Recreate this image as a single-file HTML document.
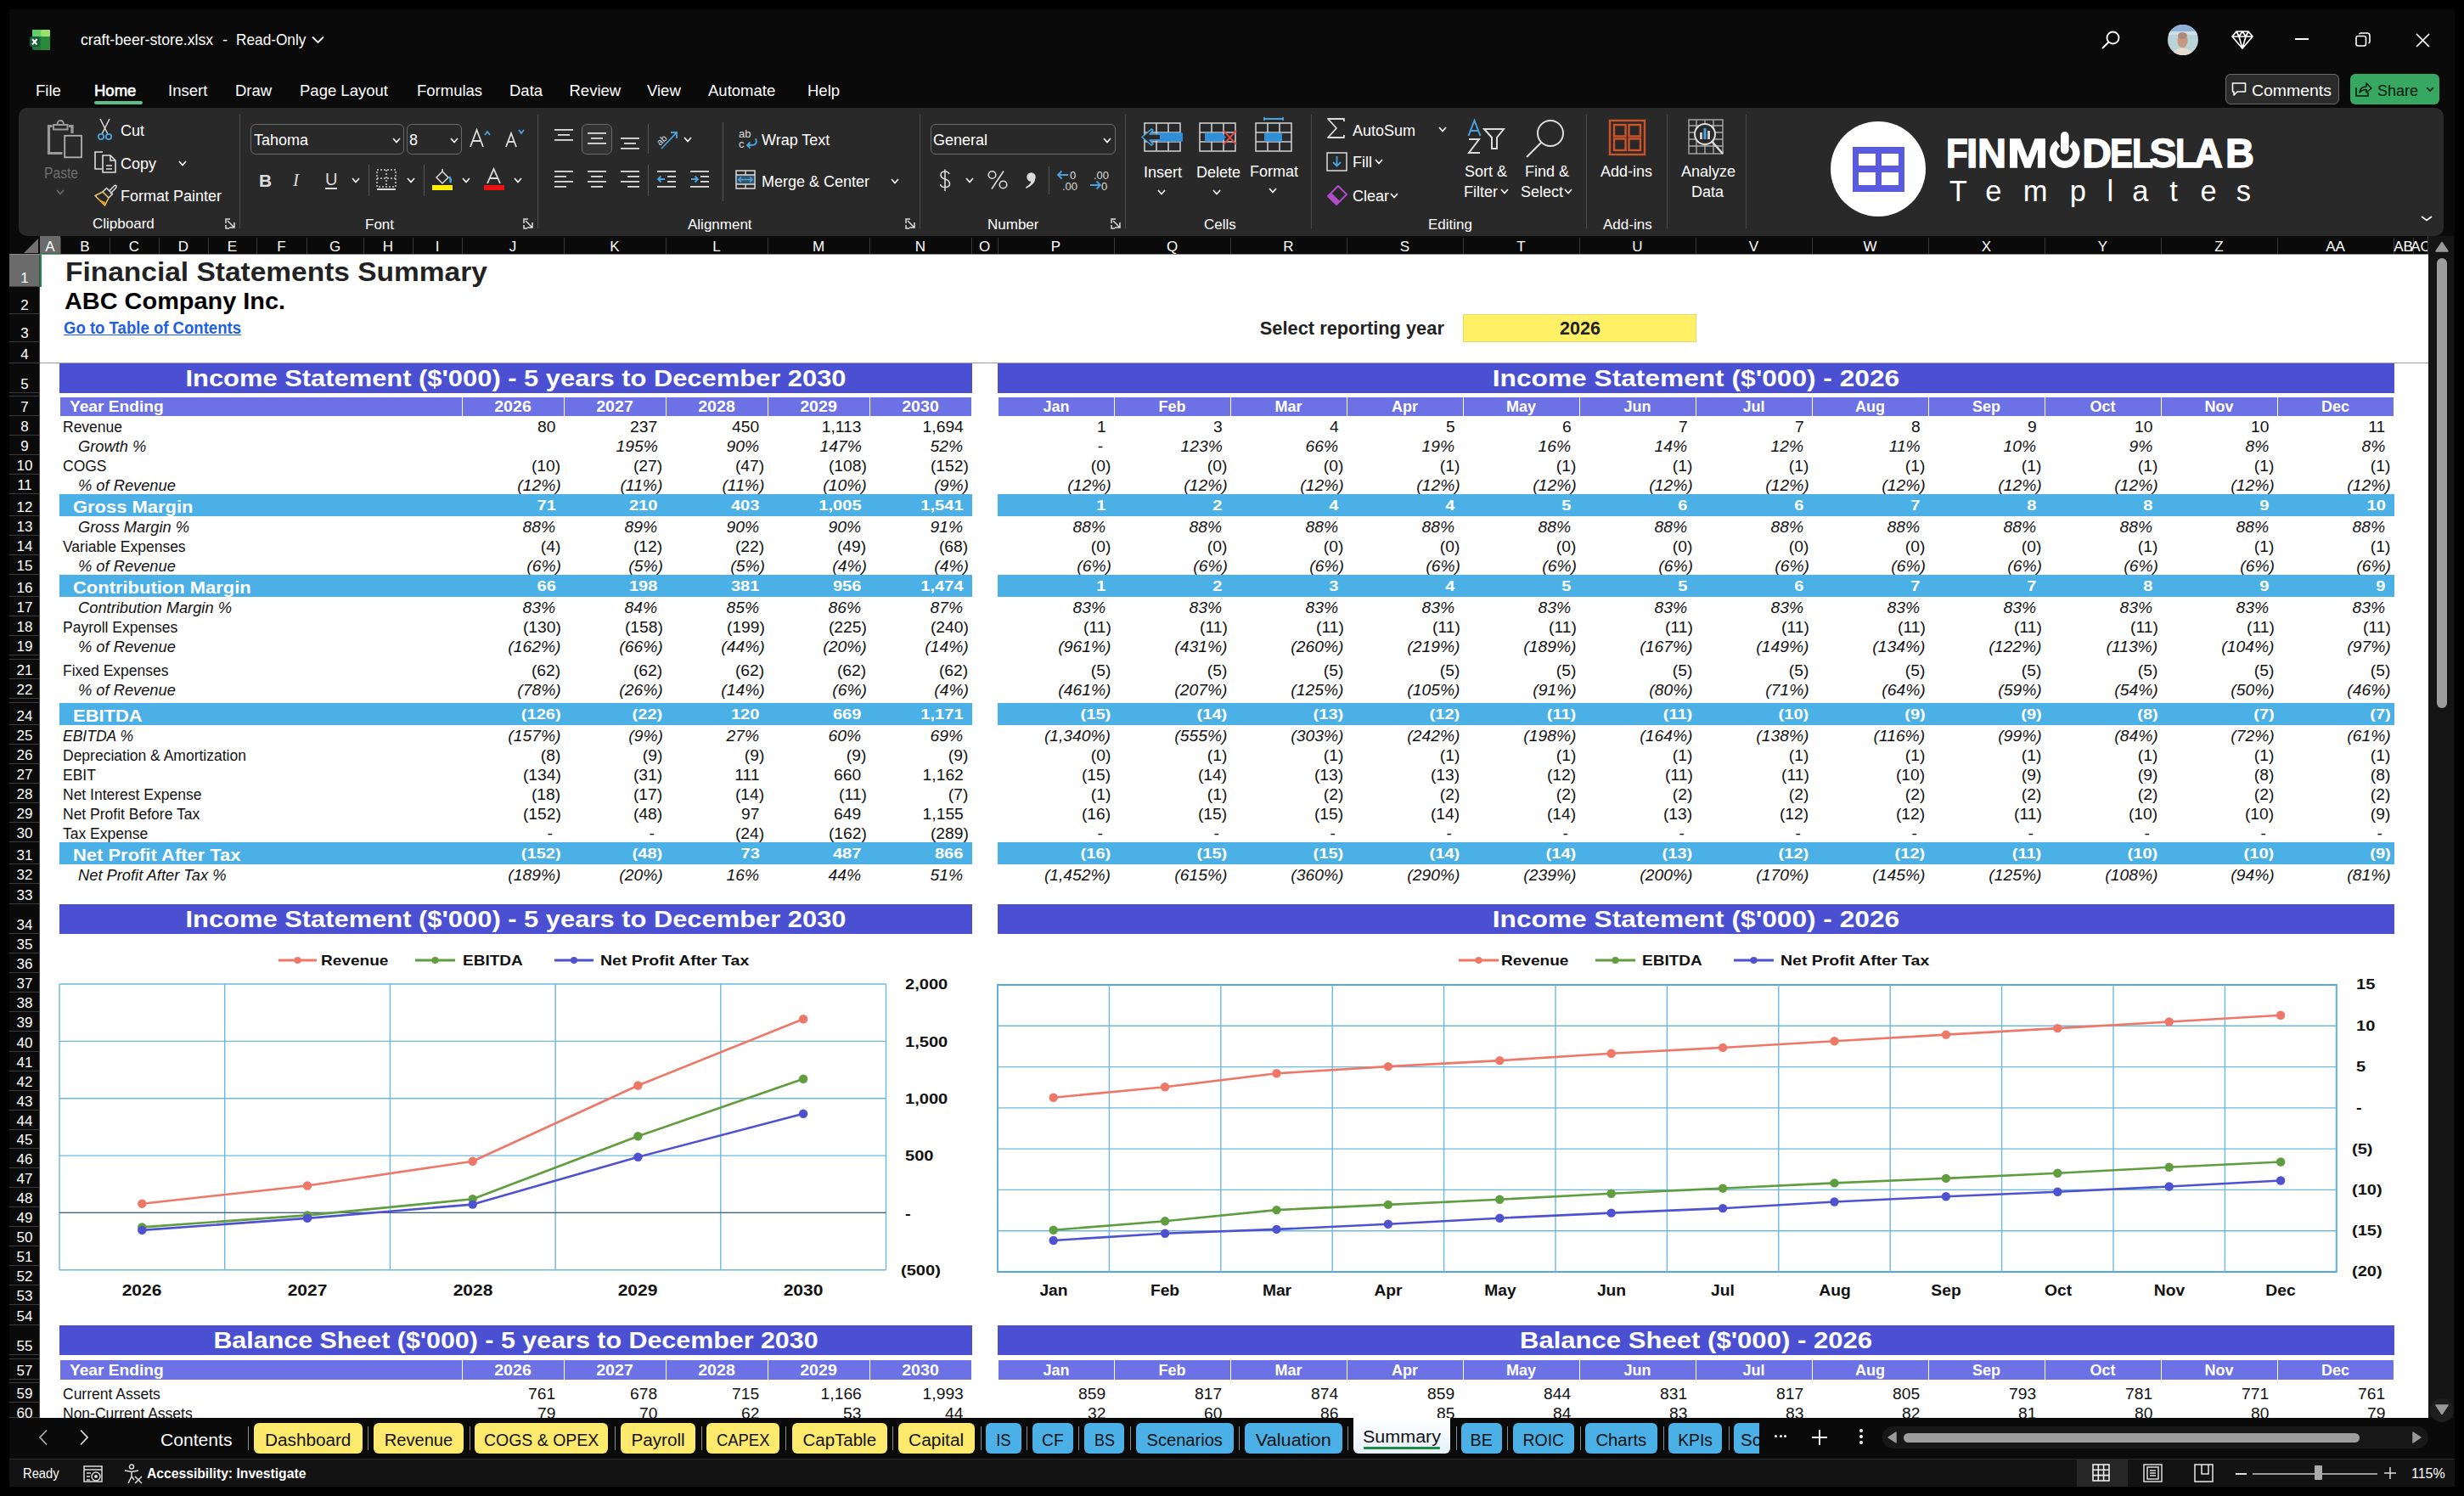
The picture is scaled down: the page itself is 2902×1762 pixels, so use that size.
<!DOCTYPE html><html><head><meta charset="utf-8"><style>
*{margin:0;padding:0;box-sizing:border-box}
html,body{width:2902px;height:1762px;overflow:hidden;background:#000;font-family:"Liberation Sans",sans-serif}
.a{position:absolute}
.t{position:absolute;white-space:nowrap;line-height:1}
.ui{color:#fff;font-size:18px}
svg{position:absolute;overflow:visible}
</style></head><body><div class="a" style="left:11px;top:11px;width:2880px;height:1740px;background:#0a0a0a"></div>
<svg style="left:35px;top:35px" width="24" height="24" viewBox="0 0 24 24">
<rect x="3" y="0" width="21" height="24" rx="2.5" fill="#1f7a3a"/>
<rect x="3" y="0" width="10" height="8" fill="#5fcf6a"/><rect x="13" y="0" width="11" height="8" rx="1" fill="#9be06a"/>
<rect x="13" y="8" width="11" height="16" fill="#2a8a3c"/>
<rect x="0" y="8" width="12" height="12" rx="2" fill="#185c37"/>
<path d="M3 11 L8.5 17.5 M8.5 11 L3 17.5" stroke="#fff" stroke-width="2"/>
</svg>
<div class="t" style="left:95.4px;top:38.0px;font-size:18.5px;color:#fff;transform:scaleX(0.955);transform-origin:0 0">craft-beer-store.xlsx</div>
<div class="t" style="left:262.0px;top:38.0px;font-size:18.5px;color:#fff">-</div>
<div class="t" style="left:278.0px;top:38.0px;font-size:18.5px;color:#fff;transform:scaleX(0.932);transform-origin:0 0">Read-Only</div>
<svg style="left:367px;top:42px" width="15" height="10"><path d="M1 1.5 L7.5 8 L14 1.5" stroke="#fff" stroke-width="1.8" fill="none"/></svg>
<svg style="left:2474px;top:36px" width="24" height="22"><circle cx="14.5" cy="8.5" r="7" stroke="#fff" stroke-width="1.8" fill="none"/><path d="M9.5 13.5 L2 21" stroke="#fff" stroke-width="2"/></svg>
<svg style="left:2552px;top:28px" width="38" height="38"><defs><clipPath id="av"><circle cx="19" cy="19" r="18"/></clipPath></defs>
<g clip-path="url(#av)"><rect width="38" height="38" fill="#b9d3d6"/><rect y="0" width="38" height="9" fill="#8fb0d8"/><rect y="9" width="38" height="4" fill="#cfe0e8"/>
<ellipse cx="18.5" cy="20" rx="6" ry="8.5" fill="#c49a84"/><ellipse cx="18.5" cy="14" rx="5.5" ry="4" fill="#b08878"/><path d="M5 38 Q8 29 18.5 28.5 Q29 29 32 38 Z" fill="#e6ddd0"/></g></svg>
<svg style="left:2628px;top:35px" width="26" height="24"><path d="M6 2 H20 L25 8 L13 22 L1 8 Z M1 8 H25 M9 8 L13 22 L17 8 M6 2 L9 8 L13 2 L17 8 L20 2" stroke="#fff" stroke-width="1.7" fill="none" stroke-linejoin="round"/></svg>
<div class="a" style="left:2703px;top:45px;width:16px;height:2px;background:#fff"></div>
<svg style="left:2774px;top:38px" width="18" height="17"><rect x="1" y="4.5" width="11.5" height="11.5" rx="2.2" stroke="#fff" stroke-width="1.6" fill="none"/><path d="M4.5 2.2 Q5 1 6.5 1 H14 Q17 1 17 4 V11 Q17 12.5 15.5 13" stroke="#fff" stroke-width="1.6" fill="none"/></svg>
<svg style="left:2845px;top:39px" width="17" height="17"><path d="M1 1 L16 16 M16 1 L1 16" stroke="#fff" stroke-width="1.7"/></svg>
<div class="a" style="left:2621px;top:87px;width:134px;height:36px;border:1.5px solid #6a6a6a;border-radius:6px;background:#2b2b2b"></div>
<svg style="left:2628px;top:96px" width="18" height="18"><path d="M1.5 2 H16.5 V12 H7 L3 16 V12 H1.5 Z" stroke="#fff" stroke-width="1.6" fill="none" stroke-linejoin="round"/></svg>
<div class="t" style="left:2652.0px;top:97.8px;font-size:18px;color:#fff;transform:scaleX(1.08);transform-origin:0 0">Comments</div>
<div class="a" style="left:2768px;top:87px;width:105px;height:36px;background:#37a862;border-radius:6px"></div>
<svg style="left:2773px;top:96px" width="21" height="19"><path d="M2 7 V17 H16 V13" stroke="#0a1a10" stroke-width="1.6" fill="none"/><path d="M6 13 Q7 6 14 6 V2 L20 8 L14 13 V9.5 Q9 9.5 6 13 Z" stroke="#0a1a10" stroke-width="1.5" fill="none" stroke-linejoin="round"/></svg>
<div class="t" style="left:2800.0px;top:97.8px;font-size:18px;color:#0a1a10">Share</div>
<svg style="left:2857px;top:102px" width="10" height="7"><path d="M1 1 L5 5 L9 1" stroke="#0a1a10" stroke-width="1.6" fill="none"/></svg>
<div class="t" style="left:42.0px;top:98.3px;font-size:18.5px;color:#fff">File</div>
<div class="t" style="left:111.0px;top:98.3px;font-size:18.5px;color:#fff;-webkit-text-stroke:0.6px #fff">Home</div>
<div class="t" style="left:198.0px;top:98.3px;font-size:18.5px;color:#fff">Insert</div>
<div class="t" style="left:277.0px;top:98.3px;font-size:18.5px;color:#fff">Draw</div>
<div class="t" style="left:353.0px;top:98.3px;font-size:18.5px;color:#fff">Page Layout</div>
<div class="t" style="left:491.0px;top:98.3px;font-size:18.5px;color:#fff">Formulas</div>
<div class="t" style="left:600.0px;top:98.3px;font-size:18.5px;color:#fff">Data</div>
<div class="t" style="left:670.5px;top:98.3px;font-size:18.5px;color:#fff">Review</div>
<div class="t" style="left:762.0px;top:98.3px;font-size:18.5px;color:#fff">View</div>
<div class="t" style="left:834.0px;top:98.3px;font-size:18.5px;color:#fff">Automate</div>
<div class="t" style="left:951.0px;top:98.3px;font-size:18.5px;color:#fff">Help</div>
<div class="a" style="left:111px;top:119px;width:57px;height:4px;background:#5dbe8a;border-radius:2px"></div>
<div class="a" style="left:22px;top:127px;width:2856px;height:151px;background:#292929;border-radius:10px"></div>
<svg style="left:54px;top:140px" width="44" height="48"><g fill="none" stroke-linejoin="miter">
<path d="M7.5 8.5 H3.5 V40.5 H19.5" stroke="#9a9a9a" stroke-width="3.2"/><path d="M27 8.5 H31 V17" stroke="#9a9a9a" stroke-width="3.2"/>
<rect x="9" y="7" width="16.5" height="5.5" stroke="#9a9a9a" stroke-width="2"/><path d="M13.5 7 Q13.5 2 17.2 2 Q21 2 21 7" stroke="#9a9a9a" stroke-width="1.8"/>
<rect x="22.2" y="19.8" width="19.8" height="25.5" stroke="#b0b0b0" stroke-width="1.8"/></g></svg>
<div class="t" style="left:52.0px;top:194.8px;font-size:18px;color:#6e6e6e;transform:scaleX(0.87);transform-origin:0 0">Paste</div>
<svg style="left:66.0px;top:223px" width="10" height="7"><path d="M1 1 L5.0 5.5 L9 1" stroke="#6e6e6e" stroke-width="1.6" fill="none"/></svg>
<svg style="left:114px;top:139px" width="20" height="27"><path d="M4 1 L13 19 M15 1 L6 19" stroke="#ddd" stroke-width="1.5"/><circle cx="5" cy="22" r="3.2" stroke="#4aa3df" stroke-width="1.8" fill="none"/><circle cx="14" cy="22" r="3.2" stroke="#4aa3df" stroke-width="1.8" fill="none"/></svg>
<div class="t" style="left:142.0px;top:144.8px;font-size:18px;color:#fff">Cut</div>
<svg style="left:111px;top:178px" width="27" height="27"><g stroke="#ddd" stroke-width="1.6" fill="none"><path d="M10 1 H1 V21 H9"/><path d="M10 5 H19 L25 11 V25 H10 Z"/><path d="M19 5 V11 H25 M14 17 H21 M14 21 H21"/></g></svg>
<div class="t" style="left:142.0px;top:183.8px;font-size:18px;color:#fff">Copy</div>
<svg style="left:210.0px;top:189px" width="10" height="7"><path d="M1 1 L5.0 5.5 L9 1" stroke="#fff" stroke-width="1.6" fill="none"/></svg>
<svg style="left:110px;top:216px" width="28" height="27"><path d="M2 14.5 L11 10 L18 17 L13.5 26 Z" fill="none" stroke="#f0c860" stroke-width="1.5" stroke-linejoin="round"/><path d="M4.5 18 L14 22 L13.5 26 Z" fill="#e8a020"/><path d="M11 10 L15.5 5.5 L22.5 12.5 L18 17" fill="none" stroke="#ddd" stroke-width="1.5" stroke-linejoin="round"/><path d="M18.5 9 L24.5 3 Q26 1.5 27 3 Q27.5 4.5 26 6 L20 12" fill="none" stroke="#ddd" stroke-width="1.5" stroke-linejoin="round"/></svg>
<div class="t" style="left:142.0px;top:221.8px;font-size:18px;color:#fff">Format Painter</div>
<div class="t" style="left:109.0px;top:254.6px;font-size:17px;color:#fff">Clipboard</div>
<svg style="left:265px;top:257px" width="13" height="13"><path d="M1 6 V1 H6 M3 3 L11 11 M11 5 V11 H5 M1 8 V12 H5" stroke="#ddd" stroke-width="1.5" fill="none"/></svg>
<div class="a" style="left:282px;top:135px;width:1px;height:134px;background:#4a4a4a"></div>
<div class="a" style="left:295px;top:146px;width:181px;height:36px;border:1.5px solid #6a6a6a;border-radius:6px"></div>
<div class="t" style="left:299.0px;top:155.8px;font-size:18px;color:#fff">Tahoma</div>
<svg style="left:462.0px;top:162px" width="10" height="7"><path d="M1 1 L5.0 5.5 L9 1" stroke="#fff" stroke-width="1.6" fill="none"/></svg>
<div class="a" style="left:479px;top:146px;width:65px;height:36px;border:1.5px solid #6a6a6a;border-radius:6px"></div>
<div class="t" style="left:482.0px;top:155.8px;font-size:18px;color:#fff">8</div>
<svg style="left:530.0px;top:162px" width="10" height="7"><path d="M1 1 L5.0 5.5 L9 1" stroke="#fff" stroke-width="1.6" fill="none"/></svg>
<svg style="left:553px;top:151px" width="26" height="24"><path d="M1 22 L8.5 2 L16 22 M4 15 H13" stroke="#ddd" stroke-width="1.8" fill="none"/><path d="M18 8 L21 4 L24 8" stroke="#4aa3df" stroke-width="1.8" fill="none"/></svg>
<svg style="left:595px;top:151px" width="24" height="24"><path d="M1 22 L7 6 L13 22 M3.5 16 H10.5" stroke="#ddd" stroke-width="1.8" fill="none"/><path d="M16 2 L19 6 L22 2" stroke="#4aa3df" stroke-width="1.8" fill="none"/></svg>
<div class="t" style="left:305.0px;top:202.2px;font-size:21px;color:#ddd;font-weight:bold">B</div>
<div class="t" style="left:345.0px;top:202.2px;font-size:21px;color:#ddd;font-family:Liberation Serif;font-style:italic">I</div>
<div class="t" style="left:383.0px;top:201.1px;font-size:20px;color:#ddd">U</div>
<div class="a" style="left:383px;top:221px;width:14px;height:2px;background:#ddd"></div>
<svg style="left:414.0px;top:209px" width="10" height="7"><path d="M1 1 L5.0 5.5 L9 1" stroke="#fff" stroke-width="1.6" fill="none"/></svg>
<div class="a" style="left:434px;top:194px;width:1px;height:37px;background:#555"></div>
<svg style="left:443px;top:199px" width="25" height="26"><g stroke="#ccc" stroke-width="1.5" fill="none" stroke-dasharray="2 2"><rect x="1" y="1" width="22" height="20"/><path d="M12 1 V21 M1 11 H23"/></g><path d="M1 24 H23" stroke="#ddd" stroke-width="2"/></svg>
<svg style="left:479.0px;top:209px" width="10" height="7"><path d="M1 1 L5.0 5.5 L9 1" stroke="#fff" stroke-width="1.6" fill="none"/></svg>
<div class="a" style="left:499px;top:194px;width:1px;height:37px;background:#555"></div>
<svg style="left:508px;top:198px" width="26" height="27"><path d="M6 11 L13 4 L20 11 L13 18 Z" stroke="#ddd" stroke-width="1.5" fill="none"/><path d="M13 4 V1" stroke="#ddd" stroke-width="1.5"/><path d="M21 10 Q24 14 22 17" stroke="#4aa3df" stroke-width="2.5" fill="none"/><rect x="1" y="20" width="24" height="6" fill="#ffee00"/></svg>
<svg style="left:544.0px;top:209px" width="10" height="7"><path d="M1 1 L5.0 5.5 L9 1" stroke="#fff" stroke-width="1.6" fill="none"/></svg>
<svg style="left:569px;top:198px" width="26" height="27"><path d="M5 18 L12.5 1 L20 18 M8 12 H17" stroke="#ddd" stroke-width="1.8" fill="none"/><rect x="1" y="20" width="24" height="6" fill="#ee1111"/></svg>
<svg style="left:605.0px;top:209px" width="10" height="7"><path d="M1 1 L5.0 5.5 L9 1" stroke="#fff" stroke-width="1.6" fill="none"/></svg>
<div class="t" style="left:430.0px;top:255.6px;font-size:17px;color:#fff">Font</div>
<svg style="left:616px;top:257px" width="13" height="13"><path d="M1 6 V1 H6 M3 3 L11 11 M11 5 V11 H5 M1 8 V12 H5" stroke="#ddd" stroke-width="1.5" fill="none"/></svg>
<div class="a" style="left:633px;top:135px;width:1px;height:134px;background:#4a4a4a"></div>
<svg style="left:653px;top:152px" width="22" height="20"><rect x="0.0" y="0" width="22" height="1.8" fill="#ddd"/><rect x="4.0" y="6" width="14" height="1.8" fill="#ddd"/><rect x="0.0" y="12" width="22" height="1.8" fill="#ddd"/></svg>
<div class="a" style="left:685px;top:146px;width:36px;height:36px;border:1.5px solid #6a6a6a;border-radius:6px;background:#333"></div>
<svg style="left:692px;top:156px" width="22" height="20"><rect x="0.0" y="0" width="22" height="1.8" fill="#ddd"/><rect x="4.0" y="6" width="14" height="1.8" fill="#ddd"/><rect x="0.0" y="12" width="22" height="1.8" fill="#ddd"/></svg>
<svg style="left:731px;top:162px" width="22" height="20"><rect x="0.0" y="0" width="22" height="1.8" fill="#ddd"/><rect x="4.0" y="6" width="14" height="1.8" fill="#ddd"/><rect x="0.0" y="12" width="22" height="1.8" fill="#ddd"/></svg>
<div class="a" style="left:763px;top:146px;width:1px;height:35px;background:#555"></div>
<svg style="left:771px;top:151px" width="30" height="26"><text x="2" y="18" transform="rotate(-45 8 14)" font-size="11" fill="#ddd" font-family="Liberation Sans">ab</text><path d="M8 24 L26 5 M19 5 H26 V12" stroke="#4aa3df" stroke-width="1.8" fill="none"/></svg>
<svg style="left:805.0px;top:161px" width="10" height="7"><path d="M1 1 L5.0 5.5 L9 1" stroke="#fff" stroke-width="1.6" fill="none"/></svg>
<svg style="left:653px;top:201px" width="22" height="26"><rect x="0" y="0" width="22" height="1.8" fill="#ddd"/><rect x="0" y="6" width="14" height="1.8" fill="#ddd"/><rect x="0" y="12" width="22" height="1.8" fill="#ddd"/><rect x="0" y="18" width="14" height="1.8" fill="#ddd"/></svg>
<svg style="left:692px;top:201px" width="22" height="26"><rect x="0.0" y="0" width="22" height="1.8" fill="#ddd"/><rect x="4.0" y="6" width="14" height="1.8" fill="#ddd"/><rect x="0.0" y="12" width="22" height="1.8" fill="#ddd"/><rect x="4.0" y="18" width="14" height="1.8" fill="#ddd"/></svg>
<svg style="left:731px;top:201px" width="22" height="26"><rect x="0" y="0" width="22" height="1.8" fill="#ddd"/><rect x="8" y="6" width="14" height="1.8" fill="#ddd"/><rect x="0" y="12" width="22" height="1.8" fill="#ddd"/><rect x="8" y="18" width="14" height="1.8" fill="#ddd"/></svg>
<div class="a" style="left:763px;top:194px;width:1px;height:37px;background:#555"></div>
<svg style="left:774px;top:201px" width="23" height="21"><g fill="#ddd"><rect x="0" y="0" width="22" height="1.8"/><rect x="12" y="6" width="10" height="1.8"/><rect x="12" y="12" width="10" height="1.8"/><rect x="0" y="18" width="22" height="1.8"/></g><path d="M9 10 H1 M4.5 6.5 L1 10 L4.5 13.5" stroke="#4aa3df" stroke-width="1.8" fill="none"/></svg>
<svg style="left:813px;top:201px" width="23" height="21"><g fill="#ddd"><rect x="0" y="0" width="22" height="1.8"/><rect x="12" y="6" width="10" height="1.8"/><rect x="12" y="12" width="10" height="1.8"/><rect x="0" y="18" width="22" height="1.8"/></g><path d="M1 10 H9 M5.5 6.5 L9 10 L5.5 13.5" stroke="#4aa3df" stroke-width="1.8" fill="none"/></svg>
<div class="a" style="left:851px;top:144px;width:1px;height:93px;background:#555"></div>
<svg style="left:870px;top:151px" width="24" height="26"><text x="0" y="11" font-size="13" fill="#ddd" font-family="Liberation Sans">ab</text><text x="0" y="23" font-size="13" fill="#ddd" font-family="Liberation Sans">c</text><path d="M20 12 Q23 20 15 20 H10 M13.5 16.5 L10 20 L13.5 23.5" stroke="#4aa3df" stroke-width="1.8" fill="none"/></svg>
<div class="t" style="left:897.0px;top:155.8px;font-size:18px;color:#fff">Wrap Text</div>
<svg style="left:866px;top:200px" width="25" height="24"><rect x="1" y="1" width="22" height="21" stroke="#ddd" stroke-width="1.5" fill="none"/><rect x="1" y="6" width="22" height="11" fill="#4aa3df" opacity="0.35"/><path d="M1 6 H23 M1 17 H23 M12 1 V6 M12 17 V22" stroke="#ddd" stroke-width="1.4"/><path d="M4 11.5 H20 M7 8.5 L4 11.5 L7 14.5 M17 8.5 L20 11.5 L17 14.5" stroke="#4aa3df" stroke-width="1.6" fill="none"/></svg>
<div class="t" style="left:897.0px;top:204.8px;font-size:18px;color:#fff">Merge &amp; Center</div>
<svg style="left:1049.0px;top:210px" width="10" height="7"><path d="M1 1 L5.0 5.5 L9 1" stroke="#fff" stroke-width="1.6" fill="none"/></svg>
<div class="t" style="left:810.0px;top:255.6px;font-size:17px;color:#fff">Alignment</div>
<svg style="left:1066px;top:257px" width="13" height="13"><path d="M1 6 V1 H6 M3 3 L11 11 M11 5 V11 H5 M1 8 V12 H5" stroke="#ddd" stroke-width="1.5" fill="none"/></svg>
<div class="a" style="left:1083px;top:135px;width:1px;height:134px;background:#4a4a4a"></div>
<div class="a" style="left:1096px;top:146px;width:218px;height:36px;border:1.5px solid #6a6a6a;border-radius:6px"></div>
<div class="t" style="left:1099.0px;top:155.8px;font-size:18px;color:#fff">General</div>
<svg style="left:1299.0px;top:162px" width="10" height="7"><path d="M1 1 L5.0 5.5 L9 1" stroke="#fff" stroke-width="1.6" fill="none"/></svg>
<svg style="left:1105px;top:199px" width="16" height="27"><path d="M13 6 Q12 3 8 3 Q3 3 3 7 Q3 10.5 8 12 Q13.5 13.5 13.5 17.5 Q13.5 21.5 8 21.5 Q3 21.5 2.5 18 M8 0.5 V26" stroke="#ddd" stroke-width="1.6" fill="none"/></svg>
<svg style="left:1137.0px;top:209px" width="10" height="7"><path d="M1 1 L5.0 5.5 L9 1" stroke="#fff" stroke-width="1.6" fill="none"/></svg>
<svg style="left:1163px;top:200px" width="25" height="24"><circle cx="5.5" cy="6" r="4.3" stroke="#ddd" stroke-width="1.6" fill="none"/><circle cx="18.5" cy="17.5" r="4.3" stroke="#ddd" stroke-width="1.6" fill="none"/><path d="M19 1.5 L5 22.5" stroke="#ddd" stroke-width="1.6"/></svg>
<svg style="left:1207px;top:202px" width="14" height="21"><circle cx="7.5" cy="6.5" r="5.2" fill="#ddd"/><path d="M12.2 7 Q13 15 1.5 20 L1 18.5 Q8 14.5 7.5 10 Z" fill="#ddd"/></svg>
<div class="a" style="left:1235px;top:196px;width:1px;height:33px;background:#555"></div>
<svg style="left:1244px;top:199px" width="26" height="26"><path d="M14 7 H2 M6.5 2.5 L2 7 L6.5 11.5" stroke="#4aa3df" stroke-width="1.8" fill="none"/><text x="16" y="12" font-size="13" fill="#ddd" font-family="Liberation Sans">0</text><text x="7" y="24.5" font-size="13" fill="#ddd" font-family="Liberation Sans">.00</text></svg>
<svg style="left:1282px;top:199px" width="28" height="26"><text x="6" y="12" font-size="13" fill="#ddd" font-family="Liberation Sans">.00</text><path d="M2 19 H14 M9.5 14.5 L14 19 L9.5 23.5" stroke="#4aa3df" stroke-width="1.8" fill="none"/><text x="15" y="24.5" font-size="13" fill="#ddd" font-family="Liberation Sans">0</text></svg>
<div class="t" style="left:1163.0px;top:255.6px;font-size:17px;color:#fff">Number</div>
<svg style="left:1308px;top:257px" width="13" height="13"><path d="M1 6 V1 H6 M3 3 L11 11 M11 5 V11 H5 M1 8 V12 H5" stroke="#ddd" stroke-width="1.5" fill="none"/></svg>
<div class="a" style="left:1325px;top:135px;width:1px;height:134px;background:#4a4a4a"></div>
<svg style="left:1340px;top:139px" width="62" height="45" viewBox="-8 -6 62 45"><g stroke="#ccc" stroke-width="1.6" fill="none">
<rect x="0" y="0" width="42" height="33"/><path d="M0 11 H42 M0 22 H42 M14 0 V33 M28 0 V33"/></g><rect x="16" y="11.5" width="29" height="10" fill="#2f8fd8"/><path d="M15 16.5 H44" stroke="#2f8fd8" stroke-width="10"/><path d="M18 13 H6 L10 8.5 L8 7 L-3 16.5 L8 26 L10 24.5 L6 20 H18" stroke="#4aa3df" stroke-width="1.6" fill="#2a2a2a" stroke-linejoin="round"/></svg>
<div class="t" style="left:1347.0px;top:193.8px;font-size:18px;color:#fff">Insert</div>
<svg style="left:1363.0px;top:223px" width="10" height="7"><path d="M1 1 L5.0 5.5 L9 1" stroke="#fff" stroke-width="1.6" fill="none"/></svg>
<svg style="left:1405px;top:139px" width="62" height="45" viewBox="-8 -6 62 45"><g stroke="#ccc" stroke-width="1.6" fill="none">
<rect x="0" y="0" width="42" height="33"/><path d="M0 11 H42 M0 22 H42 M14 0 V33 M28 0 V33"/></g><path d="M6 11.5 H26 L31 16.5 L26 21.5 H6 Z" fill="#2f8fd8"/><path d="M28 9 L43 25 M43 9 L28 25" stroke="#e04848" stroke-width="2"/></svg>
<div class="t" style="left:1409.0px;top:193.8px;font-size:18px;color:#fff">Delete</div>
<svg style="left:1428.0px;top:223px" width="10" height="7"><path d="M1 1 L5.0 5.5 L9 1" stroke="#fff" stroke-width="1.6" fill="none"/></svg>
<svg style="left:1471px;top:139px" width="62" height="45" viewBox="-8 -6 62 45"><g stroke="#ccc" stroke-width="1.6" fill="none">
<rect x="0" y="0" width="42" height="33"/><path d="M0 11 H42 M0 22 H42 M14 0 V33 M28 0 V33"/></g><rect x="10" y="11.5" width="21" height="10" fill="#2f8fd8"/><path d="M10 -5 H32 M10 -7 V-3 M32 -7 V-3" stroke="#4aa3df" stroke-width="1.8"/></svg>
<div class="t" style="left:1472.0px;top:192.8px;font-size:18px;color:#fff">Format</div>
<svg style="left:1494.0px;top:221px" width="10" height="7"><path d="M1 1 L5.0 5.5 L9 1" stroke="#fff" stroke-width="1.6" fill="none"/></svg>
<div class="t" style="left:1418.0px;top:255.6px;font-size:17px;color:#fff">Cells</div>
<div class="a" style="left:1544px;top:135px;width:1px;height:134px;background:#4a4a4a"></div>
<svg style="left:1563px;top:139px" width="22" height="24"><path d="M20 4 V1 H1 L11 12 L1 23 H20 V20" stroke="#ddd" stroke-width="1.8" fill="none" stroke-linejoin="round"/></svg>
<div class="t" style="left:1593.0px;top:144.8px;font-size:18px;color:#fff">AutoSum</div>
<svg style="left:1694.0px;top:149px" width="10" height="7"><path d="M1 1 L5.0 5.5 L9 1" stroke="#fff" stroke-width="1.6" fill="none"/></svg>
<svg style="left:1562px;top:179px" width="25" height="24"><rect x="1" y="1" width="23" height="21" stroke="#ddd" stroke-width="1.5" fill="none"/><path d="M12.5 5 V16 M8 12 L12.5 16.5 L17 12" stroke="#4aa3df" stroke-width="1.8" fill="none"/></svg>
<div class="t" style="left:1593.0px;top:181.8px;font-size:18px;color:#fff">Fill</div>
<svg style="left:1619.0px;top:187px" width="10" height="7"><path d="M1 1 L5.0 5.5 L9 1" stroke="#fff" stroke-width="1.6" fill="none"/></svg>
<svg style="left:1562px;top:217px" width="26" height="26"><path d="M14 2 L24 12 L12 24 L2 14 Z" fill="none" stroke="#b04cc8" stroke-width="2" stroke-linejoin="round"/><path d="M2 14 L6 10 L16 20 L12 24 Z" fill="#b04cc8"/></svg>
<div class="t" style="left:1593.0px;top:221.8px;font-size:18px;color:#fff">Clear</div>
<svg style="left:1637.0px;top:227px" width="10" height="7"><path d="M1 1 L5.0 5.5 L9 1" stroke="#fff" stroke-width="1.6" fill="none"/></svg>
<svg style="left:1727px;top:140px" width="48" height="44"><path d="M2.5 20 L9.5 2 L16.5 20 M5 14 H14" stroke="#4aa3df" stroke-width="2" fill="none"/><path d="M3 24 H15 L3 40 H16" stroke="#ddd" stroke-width="2" fill="none" stroke-linejoin="miter"/><path d="M21 12 H44 L36 22 V35 H30 V22 Z" stroke="#ddd" stroke-width="2" fill="none" stroke-linejoin="miter"/></svg>
<div class="t" style="left:1725.0px;top:192.8px;font-size:18px;color:#fff">Sort &amp;</div>
<div class="t" style="left:1724.0px;top:216.8px;font-size:18px;color:#fff">Filter</div>
<svg style="left:1767.0px;top:222px" width="10" height="7"><path d="M1 1 L5.0 5.5 L9 1" stroke="#fff" stroke-width="1.6" fill="none"/></svg>
<svg style="left:1796px;top:139px" width="48" height="48"><circle cx="30" cy="18" r="15" stroke="#ddd" stroke-width="2" fill="none"/><path d="M19.5 28.5 L2 46" stroke="#ddd" stroke-width="2.2"/></svg>
<div class="t" style="left:1796.0px;top:192.8px;font-size:18px;color:#fff">Find &amp;</div>
<div class="t" style="left:1791.0px;top:216.8px;font-size:18px;color:#fff">Select</div>
<svg style="left:1842.0px;top:222px" width="10" height="7"><path d="M1 1 L5.0 5.5 L9 1" stroke="#fff" stroke-width="1.6" fill="none"/></svg>
<div class="t" style="left:1682.0px;top:255.6px;font-size:17px;color:#fff">Editing</div>
<div class="a" style="left:1868px;top:135px;width:1px;height:134px;background:#4a4a4a"></div>
<svg style="left:1894px;top:140px" width="45" height="44"><g stroke="#cc5428" stroke-width="2.4" fill="none"><rect x="2" y="2" width="41" height="40"/><rect x="7" y="7" width="13.5" height="13.5"/><rect x="24.5" y="7" width="13.5" height="13.5"/><rect x="7" y="23.5" width="13.5" height="13.5"/><rect x="24.5" y="23.5" width="13.5" height="13.5"/></g></svg>
<div class="t" style="left:1885.0px;top:192.8px;font-size:18px;color:#fff">Add-ins</div>
<div class="t" style="left:1888.0px;top:255.6px;font-size:17px;color:#fff">Add-ins</div>
<div class="a" style="left:1963px;top:135px;width:1px;height:134px;background:#4a4a4a"></div>
<svg style="left:1988px;top:140px" width="44" height="44"><g stroke="#aaa" stroke-width="1.4" fill="none"><rect x="1" y="1" width="40" height="40"/><path d="M1 8 H41 M1 16 H41 M1 24 H41 M1 32 H41 M10 1 V41 M20 1 V41 M30 1 V41"/></g><circle cx="20" cy="18" r="12" fill="#292929" stroke="#ddd" stroke-width="2"/><rect x="14" y="16" width="3" height="8" fill="#ccc"/><rect x="18.5" y="11" width="3" height="13" fill="#4aa3df"/><rect x="23" y="14" width="3" height="10" fill="#ccc"/><path d="M28.5 27 L41 41" stroke="#ddd" stroke-width="2.4"/></svg>
<div class="t" style="left:1980.0px;top:192.8px;font-size:18px;color:#fff">Analyze</div>
<div class="t" style="left:1992.0px;top:216.8px;font-size:18px;color:#fff">Data</div>
<div class="a" style="left:2056px;top:135px;width:1px;height:134px;background:#4a4a4a"></div>
<svg style="left:2155px;top:142px" width="114" height="114"><circle cx="57" cy="57" r="56" fill="#fff"/>
<rect x="27" y="31" width="61" height="53" fill="#5a5ae0"/>
<rect x="34" y="39" width="20" height="14" fill="#fff"/><rect x="61" y="39" width="20" height="14" fill="#fff"/>
<rect x="34" y="61" width="20" height="15" fill="#fff"/><rect x="61" y="61" width="20" height="15" fill="#fff"/></svg>
<div class="t" style="left:2292.3px;top:157.0px;font-size:48px;color:#fff;font-weight:bold;-webkit-text-stroke:1.4px #fff;transform:scaleX(0.88);transform-origin:0 0">F</div>
<div class="t" style="left:2292.6px;top:157.0px;width:60px;text-align:center;font-size:48px;color:#fff;font-weight:bold;-webkit-text-stroke:1.4px #fff;transform:scaleX(1.0)">I</div>
<div class="t" style="left:2315.8px;top:157.0px;width:60px;text-align:center;font-size:48px;color:#fff;font-weight:bold;-webkit-text-stroke:1.4px #fff;transform:scaleX(0.98)">N</div>
<div class="t" style="left:2357.9px;top:157.0px;width:60px;text-align:center;font-size:48px;color:#fff;font-weight:bold;-webkit-text-stroke:1.4px #fff;transform:scaleX(1.2)">M</div>
<div class="t" style="left:2439.5px;top:157.0px;width:60px;text-align:center;font-size:48px;color:#fff;font-weight:bold;-webkit-text-stroke:1.4px #fff;transform:scaleX(1.0)">D</div>
<div class="t" style="left:2484.8px;top:157.0px;font-size:48px;color:#fff;font-weight:bold;-webkit-text-stroke:1.4px #fff;transform:scaleX(0.85);transform-origin:0 0">E</div>
<div class="t" style="left:2510.8px;top:157.0px;font-size:48px;color:#fff;font-weight:bold;-webkit-text-stroke:1.4px #fff;transform:scaleX(0.85);transform-origin:0 0">L</div>
<div class="t" style="left:2517.4px;top:157.0px;width:60px;text-align:center;font-size:48px;color:#fff;font-weight:bold;-webkit-text-stroke:1.4px #fff;transform:scaleX(1.0)">S</div>
<div class="t" style="left:2561.9px;top:157.0px;font-size:48px;color:#fff;font-weight:bold;-webkit-text-stroke:1.4px #fff;transform:scaleX(0.85);transform-origin:0 0">L</div>
<div class="t" style="left:2571.4px;top:157.0px;width:60px;text-align:center;font-size:48px;color:#fff;font-weight:bold;-webkit-text-stroke:1.4px #fff;transform:scaleX(0.98)">A</div>
<div class="t" style="left:2608.4px;top:157.0px;width:60px;text-align:center;font-size:48px;color:#fff;font-weight:bold;-webkit-text-stroke:1.4px #fff;transform:scaleX(0.98)">B</div>
<svg style="left:2410px;top:152px" width="44" height="50"><path d="M13.9 17 A13.6 13.6 0 1 0 29.5 17" stroke="#fff" stroke-width="8.5" fill="none"/><rect x="17" y="3" width="9.6" height="26.4" rx="4.8" fill="#fff"/></svg>
<div class="t" style="left:2281.4px;top:208.2px;width:50px;text-align:center;font-size:34.5px;color:#fff">T</div>
<div class="t" style="left:2322.8px;top:208.2px;width:50px;text-align:center;font-size:34.5px;color:#fff">e</div>
<div class="t" style="left:2372.2px;top:208.2px;width:50px;text-align:center;font-size:34.5px;color:#fff">m</div>
<div class="t" style="left:2422.4px;top:208.2px;width:50px;text-align:center;font-size:34.5px;color:#fff">p</div>
<div class="t" style="left:2460.3px;top:208.2px;width:50px;text-align:center;font-size:34.5px;color:#fff">l</div>
<div class="t" style="left:2495.8px;top:208.2px;width:50px;text-align:center;font-size:34.5px;color:#fff">a</div>
<div class="t" style="left:2535.1px;top:208.2px;width:50px;text-align:center;font-size:34.5px;color:#fff">t</div>
<div class="t" style="left:2576.1px;top:208.2px;width:50px;text-align:center;font-size:34.5px;color:#fff">e</div>
<div class="t" style="left:2617.4px;top:208.2px;width:50px;text-align:center;font-size:34.5px;color:#fff">s</div>
<svg style="left:2851.0px;top:254px" width="14" height="7"><path d="M1 1 L7.0 5.5 L13 1" stroke="#fff" stroke-width="1.6" fill="none"/></svg>
<div class="a" style="left:11px;top:278px;width:2849px;height:22px;background:#0a0a0a"></div>
<svg style="left:11px;top:278px" width="36" height="22"><path d="M34 3 V20 H17 Z" fill="#707070"/></svg>
<div class="a" style="left:47px;top:278px;width:24px;height:22px;background:#6b6b6b"></div>
<div class="a" style="left:47px;top:297.5px;width:24px;height:3px;background:#217a46"></div>
<div class="t" style="left:-241.0px;top:0px;width:600px;text-align:center;"></div>
<div class="t" style="left:39.0px;top:281.6px;width:40px;text-align:center;font-size:17px;color:#fff">A</div>
<div class="a" style="left:71px;top:280px;width:1px;height:20px;background:#3a3a3a"></div>
<div class="t" style="left:-200.0px;top:0px;width:600px;text-align:center;"></div>
<div class="t" style="left:71.0px;top:281.6px;width:58px;text-align:center;font-size:17px;color:#fff">B</div>
<div class="a" style="left:129px;top:280px;width:1px;height:20px;background:#3a3a3a"></div>
<div class="t" style="left:-142.0px;top:0px;width:600px;text-align:center;"></div>
<div class="t" style="left:129.0px;top:281.6px;width:58px;text-align:center;font-size:17px;color:#fff">C</div>
<div class="a" style="left:187px;top:280px;width:1px;height:20px;background:#3a3a3a"></div>
<div class="t" style="left:-84.0px;top:0px;width:600px;text-align:center;"></div>
<div class="t" style="left:187.0px;top:281.6px;width:58px;text-align:center;font-size:17px;color:#fff">D</div>
<div class="a" style="left:245px;top:280px;width:1px;height:20px;background:#3a3a3a"></div>
<div class="t" style="left:-26.5px;top:0px;width:600px;text-align:center;"></div>
<div class="t" style="left:245.0px;top:281.6px;width:57px;text-align:center;font-size:17px;color:#fff">E</div>
<div class="a" style="left:302px;top:280px;width:1px;height:20px;background:#3a3a3a"></div>
<div class="t" style="left:31.5px;top:0px;width:600px;text-align:center;"></div>
<div class="t" style="left:302.0px;top:281.6px;width:59px;text-align:center;font-size:17px;color:#fff">F</div>
<div class="a" style="left:361px;top:280px;width:1px;height:20px;background:#3a3a3a"></div>
<div class="t" style="left:94.5px;top:0px;width:600px;text-align:center;"></div>
<div class="t" style="left:361.0px;top:281.6px;width:67px;text-align:center;font-size:17px;color:#fff">G</div>
<div class="a" style="left:428px;top:280px;width:1px;height:20px;background:#3a3a3a"></div>
<div class="t" style="left:157.0px;top:0px;width:600px;text-align:center;"></div>
<div class="t" style="left:428.0px;top:281.6px;width:58px;text-align:center;font-size:17px;color:#fff">H</div>
<div class="a" style="left:486px;top:280px;width:1px;height:20px;background:#3a3a3a"></div>
<div class="t" style="left:215.0px;top:0px;width:600px;text-align:center;"></div>
<div class="t" style="left:486.0px;top:281.6px;width:58px;text-align:center;font-size:17px;color:#fff">I</div>
<div class="a" style="left:544px;top:280px;width:1px;height:20px;background:#3a3a3a"></div>
<div class="t" style="left:304.0px;top:0px;width:600px;text-align:center;"></div>
<div class="t" style="left:544.0px;top:281.6px;width:120px;text-align:center;font-size:17px;color:#fff">J</div>
<div class="a" style="left:664px;top:280px;width:1px;height:20px;background:#3a3a3a"></div>
<div class="t" style="left:424.0px;top:0px;width:600px;text-align:center;"></div>
<div class="t" style="left:664.0px;top:281.6px;width:120px;text-align:center;font-size:17px;color:#fff">K</div>
<div class="a" style="left:784px;top:280px;width:1px;height:20px;background:#3a3a3a"></div>
<div class="t" style="left:544.0px;top:0px;width:600px;text-align:center;"></div>
<div class="t" style="left:784.0px;top:281.6px;width:120px;text-align:center;font-size:17px;color:#fff">L</div>
<div class="a" style="left:904px;top:280px;width:1px;height:20px;background:#3a3a3a"></div>
<div class="t" style="left:664.0px;top:0px;width:600px;text-align:center;"></div>
<div class="t" style="left:904.0px;top:281.6px;width:120px;text-align:center;font-size:17px;color:#fff">M</div>
<div class="a" style="left:1024px;top:280px;width:1px;height:20px;background:#3a3a3a"></div>
<div class="t" style="left:784.0px;top:0px;width:600px;text-align:center;"></div>
<div class="t" style="left:1024.0px;top:281.6px;width:120px;text-align:center;font-size:17px;color:#fff">N</div>
<div class="a" style="left:1144px;top:280px;width:1px;height:20px;background:#3a3a3a"></div>
<div class="t" style="left:859.5px;top:0px;width:600px;text-align:center;"></div>
<div class="t" style="left:1139.5px;top:281.6px;width:40px;text-align:center;font-size:17px;color:#fff">O</div>
<div class="a" style="left:1175px;top:280px;width:1px;height:20px;background:#3a3a3a"></div>
<div class="t" style="left:943.5px;top:0px;width:600px;text-align:center;"></div>
<div class="t" style="left:1175.0px;top:281.6px;width:137px;text-align:center;font-size:17px;color:#fff">P</div>
<div class="a" style="left:1312px;top:280px;width:1px;height:20px;background:#3a3a3a"></div>
<div class="t" style="left:1080.5px;top:0px;width:600px;text-align:center;"></div>
<div class="t" style="left:1312.0px;top:281.6px;width:137px;text-align:center;font-size:17px;color:#fff">Q</div>
<div class="a" style="left:1449px;top:280px;width:1px;height:20px;background:#3a3a3a"></div>
<div class="t" style="left:1217.5px;top:0px;width:600px;text-align:center;"></div>
<div class="t" style="left:1449.0px;top:281.6px;width:137px;text-align:center;font-size:17px;color:#fff">R</div>
<div class="a" style="left:1586px;top:280px;width:1px;height:20px;background:#3a3a3a"></div>
<div class="t" style="left:1354.5px;top:0px;width:600px;text-align:center;"></div>
<div class="t" style="left:1586.0px;top:281.6px;width:137px;text-align:center;font-size:17px;color:#fff">S</div>
<div class="a" style="left:1723px;top:280px;width:1px;height:20px;background:#3a3a3a"></div>
<div class="t" style="left:1491.5px;top:0px;width:600px;text-align:center;"></div>
<div class="t" style="left:1723.0px;top:281.6px;width:137px;text-align:center;font-size:17px;color:#fff">T</div>
<div class="a" style="left:1860px;top:280px;width:1px;height:20px;background:#3a3a3a"></div>
<div class="t" style="left:1628.5px;top:0px;width:600px;text-align:center;"></div>
<div class="t" style="left:1860.0px;top:281.6px;width:137px;text-align:center;font-size:17px;color:#fff">U</div>
<div class="a" style="left:1997px;top:280px;width:1px;height:20px;background:#3a3a3a"></div>
<div class="t" style="left:1765.5px;top:0px;width:600px;text-align:center;"></div>
<div class="t" style="left:1997.0px;top:281.6px;width:137px;text-align:center;font-size:17px;color:#fff">V</div>
<div class="a" style="left:2134px;top:280px;width:1px;height:20px;background:#3a3a3a"></div>
<div class="t" style="left:1902.5px;top:0px;width:600px;text-align:center;"></div>
<div class="t" style="left:2134.0px;top:281.6px;width:137px;text-align:center;font-size:17px;color:#fff">W</div>
<div class="a" style="left:2271px;top:280px;width:1px;height:20px;background:#3a3a3a"></div>
<div class="t" style="left:2039.5px;top:0px;width:600px;text-align:center;"></div>
<div class="t" style="left:2271.0px;top:281.6px;width:137px;text-align:center;font-size:17px;color:#fff">X</div>
<div class="a" style="left:2408px;top:280px;width:1px;height:20px;background:#3a3a3a"></div>
<div class="t" style="left:2176.5px;top:0px;width:600px;text-align:center;"></div>
<div class="t" style="left:2408.0px;top:281.6px;width:137px;text-align:center;font-size:17px;color:#fff">Y</div>
<div class="a" style="left:2545px;top:280px;width:1px;height:20px;background:#3a3a3a"></div>
<div class="t" style="left:2313.5px;top:0px;width:600px;text-align:center;"></div>
<div class="t" style="left:2545.0px;top:281.6px;width:137px;text-align:center;font-size:17px;color:#fff">Z</div>
<div class="a" style="left:2682px;top:280px;width:1px;height:20px;background:#3a3a3a"></div>
<div class="t" style="left:2450.5px;top:0px;width:600px;text-align:center;"></div>
<div class="t" style="left:2682.0px;top:281.6px;width:137px;text-align:center;font-size:17px;color:#fff">AA</div>
<div class="a" style="left:2819px;top:280px;width:1px;height:20px;background:#3a3a3a"></div>
<div class="t" style="left:2530.5px;top:0px;width:600px;text-align:center;"></div>
<div class="t" style="left:2810.5px;top:281.6px;width:40px;text-align:center;font-size:17px;color:#fff">AB</div>
<div class="a" style="left:2842px;top:280px;width:1px;height:20px;background:#3a3a3a"></div>
<div class="t" style="left:2551.0px;top:0px;width:600px;text-align:center;"></div>
<div class="t" style="left:2831.0px;top:281.6px;width:40px;text-align:center;font-size:17px;color:#fff">AC</div>
<div class="a" style="left:2859px;top:278px;width:1px;height:22px;background:#3a3a3a"></div>
<div class="a" style="left:11px;top:299px;width:2849px;height:1.2px;background:#8a8a8a"></div>
<div class="a" style="left:11px;top:300px;width:36px;height:1370px;background:#0a0a0a"></div>
<div class="a" style="left:11px;top:300px;width:36px;height:38px;background:#6b6b6b"></div>
<div class="a" style="left:11px;top:337px;width:36px;height:1px;background:#3a3a3a"></div>
<div class="t" style="left:11.0px;top:319.1px;width:36px;text-align:center;font-size:17px;color:#fff">1</div>
<div class="a" style="left:11px;top:369px;width:36px;height:1px;background:#3a3a3a"></div>
<div class="t" style="left:11.0px;top:351.1px;width:36px;text-align:center;font-size:17px;color:#fff">2</div>
<div class="a" style="left:11px;top:402px;width:36px;height:1px;background:#3a3a3a"></div>
<div class="t" style="left:11.0px;top:384.1px;width:36px;text-align:center;font-size:17px;color:#fff">3</div>
<div class="a" style="left:11px;top:427px;width:36px;height:1px;background:#3a3a3a"></div>
<div class="t" style="left:11.0px;top:409.1px;width:36px;text-align:center;font-size:17px;color:#fff">4</div>
<div class="a" style="left:11px;top:462px;width:36px;height:1px;background:#3a3a3a"></div>
<div class="t" style="left:11.0px;top:444.1px;width:36px;text-align:center;font-size:17px;color:#fff">5</div>
<div class="a" style="left:11px;top:466px;width:36px;height:1px;background:#3a3a3a"></div>
<div class="a" style="left:11px;top:489px;width:36px;height:1px;background:#3a3a3a"></div>
<div class="t" style="left:11.0px;top:471.1px;width:36px;text-align:center;font-size:17px;color:#fff">7</div>
<div class="a" style="left:11px;top:512px;width:36px;height:1px;background:#3a3a3a"></div>
<div class="t" style="left:11.0px;top:494.1px;width:36px;text-align:center;font-size:17px;color:#fff">8</div>
<div class="a" style="left:11px;top:535px;width:36px;height:1px;background:#3a3a3a"></div>
<div class="t" style="left:11.0px;top:517.1px;width:36px;text-align:center;font-size:17px;color:#fff">9</div>
<div class="a" style="left:11px;top:558px;width:36px;height:1px;background:#3a3a3a"></div>
<div class="t" style="left:11.0px;top:540.1px;width:36px;text-align:center;font-size:17px;color:#fff">10</div>
<div class="a" style="left:11px;top:581px;width:36px;height:1px;background:#3a3a3a"></div>
<div class="t" style="left:11.0px;top:563.1px;width:36px;text-align:center;font-size:17px;color:#fff">11</div>
<div class="a" style="left:11px;top:607px;width:36px;height:1px;background:#3a3a3a"></div>
<div class="t" style="left:11.0px;top:589.1px;width:36px;text-align:center;font-size:17px;color:#fff">12</div>
<div class="a" style="left:11px;top:630px;width:36px;height:1px;background:#3a3a3a"></div>
<div class="t" style="left:11.0px;top:612.1px;width:36px;text-align:center;font-size:17px;color:#fff">13</div>
<div class="a" style="left:11px;top:653px;width:36px;height:1px;background:#3a3a3a"></div>
<div class="t" style="left:11.0px;top:635.1px;width:36px;text-align:center;font-size:17px;color:#fff">14</div>
<div class="a" style="left:11px;top:676px;width:36px;height:1px;background:#3a3a3a"></div>
<div class="t" style="left:11.0px;top:658.1px;width:36px;text-align:center;font-size:17px;color:#fff">15</div>
<div class="a" style="left:11px;top:702px;width:36px;height:1px;background:#3a3a3a"></div>
<div class="t" style="left:11.0px;top:684.1px;width:36px;text-align:center;font-size:17px;color:#fff">16</div>
<div class="a" style="left:11px;top:725px;width:36px;height:1px;background:#3a3a3a"></div>
<div class="t" style="left:11.0px;top:707.1px;width:36px;text-align:center;font-size:17px;color:#fff">17</div>
<div class="a" style="left:11px;top:748px;width:36px;height:1px;background:#3a3a3a"></div>
<div class="t" style="left:11.0px;top:730.1px;width:36px;text-align:center;font-size:17px;color:#fff">18</div>
<div class="a" style="left:11px;top:771px;width:36px;height:1px;background:#3a3a3a"></div>
<div class="t" style="left:11.0px;top:753.1px;width:36px;text-align:center;font-size:17px;color:#fff">19</div>
<div class="a" style="left:11px;top:776px;width:36px;height:1px;background:#3a3a3a"></div>
<div class="a" style="left:11px;top:799px;width:36px;height:1px;background:#3a3a3a"></div>
<div class="t" style="left:11.0px;top:781.1px;width:36px;text-align:center;font-size:17px;color:#fff">21</div>
<div class="a" style="left:11px;top:822px;width:36px;height:1px;background:#3a3a3a"></div>
<div class="t" style="left:11.0px;top:804.1px;width:36px;text-align:center;font-size:17px;color:#fff">22</div>
<div class="a" style="left:11px;top:827px;width:36px;height:1px;background:#3a3a3a"></div>
<div class="a" style="left:11px;top:853px;width:36px;height:1px;background:#3a3a3a"></div>
<div class="t" style="left:11.0px;top:835.1px;width:36px;text-align:center;font-size:17px;color:#fff">24</div>
<div class="a" style="left:11px;top:876px;width:36px;height:1px;background:#3a3a3a"></div>
<div class="t" style="left:11.0px;top:858.1px;width:36px;text-align:center;font-size:17px;color:#fff">25</div>
<div class="a" style="left:11px;top:899px;width:36px;height:1px;background:#3a3a3a"></div>
<div class="t" style="left:11.0px;top:881.1px;width:36px;text-align:center;font-size:17px;color:#fff">26</div>
<div class="a" style="left:11px;top:922px;width:36px;height:1px;background:#3a3a3a"></div>
<div class="t" style="left:11.0px;top:904.1px;width:36px;text-align:center;font-size:17px;color:#fff">27</div>
<div class="a" style="left:11px;top:945px;width:36px;height:1px;background:#3a3a3a"></div>
<div class="t" style="left:11.0px;top:927.1px;width:36px;text-align:center;font-size:17px;color:#fff">28</div>
<div class="a" style="left:11px;top:968px;width:36px;height:1px;background:#3a3a3a"></div>
<div class="t" style="left:11.0px;top:950.1px;width:36px;text-align:center;font-size:17px;color:#fff">29</div>
<div class="a" style="left:11px;top:991px;width:36px;height:1px;background:#3a3a3a"></div>
<div class="t" style="left:11.0px;top:973.1px;width:36px;text-align:center;font-size:17px;color:#fff">30</div>
<div class="a" style="left:11px;top:1017px;width:36px;height:1px;background:#3a3a3a"></div>
<div class="t" style="left:11.0px;top:999.1px;width:36px;text-align:center;font-size:17px;color:#fff">31</div>
<div class="a" style="left:11px;top:1040px;width:36px;height:1px;background:#3a3a3a"></div>
<div class="t" style="left:11.0px;top:1022.1px;width:36px;text-align:center;font-size:17px;color:#fff">32</div>
<div class="a" style="left:11px;top:1064px;width:36px;height:1px;background:#3a3a3a"></div>
<div class="t" style="left:11.0px;top:1046.1px;width:36px;text-align:center;font-size:17px;color:#fff">33</div>
<div class="a" style="left:11px;top:1099px;width:36px;height:1px;background:#3a3a3a"></div>
<div class="t" style="left:11.0px;top:1081.1px;width:36px;text-align:center;font-size:17px;color:#fff">34</div>
<div class="a" style="left:11px;top:1122px;width:36px;height:1px;background:#3a3a3a"></div>
<div class="t" style="left:11.0px;top:1104.1px;width:36px;text-align:center;font-size:17px;color:#fff">35</div>
<div class="a" style="left:11px;top:1145px;width:36px;height:1px;background:#3a3a3a"></div>
<div class="t" style="left:11.0px;top:1127.1px;width:36px;text-align:center;font-size:17px;color:#fff">36</div>
<div class="a" style="left:11px;top:1168px;width:36px;height:1px;background:#3a3a3a"></div>
<div class="t" style="left:11.0px;top:1150.1px;width:36px;text-align:center;font-size:17px;color:#fff">37</div>
<div class="a" style="left:11px;top:1191px;width:36px;height:1px;background:#3a3a3a"></div>
<div class="t" style="left:11.0px;top:1173.1px;width:36px;text-align:center;font-size:17px;color:#fff">38</div>
<div class="a" style="left:11px;top:1214px;width:36px;height:1px;background:#3a3a3a"></div>
<div class="t" style="left:11.0px;top:1196.1px;width:36px;text-align:center;font-size:17px;color:#fff">39</div>
<div class="a" style="left:11px;top:1238px;width:36px;height:1px;background:#3a3a3a"></div>
<div class="t" style="left:11.0px;top:1220.1px;width:36px;text-align:center;font-size:17px;color:#fff">40</div>
<div class="a" style="left:11px;top:1261px;width:36px;height:1px;background:#3a3a3a"></div>
<div class="t" style="left:11.0px;top:1243.1px;width:36px;text-align:center;font-size:17px;color:#fff">41</div>
<div class="a" style="left:11px;top:1284px;width:36px;height:1px;background:#3a3a3a"></div>
<div class="t" style="left:11.0px;top:1266.1px;width:36px;text-align:center;font-size:17px;color:#fff">42</div>
<div class="a" style="left:11px;top:1307px;width:36px;height:1px;background:#3a3a3a"></div>
<div class="t" style="left:11.0px;top:1289.1px;width:36px;text-align:center;font-size:17px;color:#fff">43</div>
<div class="a" style="left:11px;top:1330px;width:36px;height:1px;background:#3a3a3a"></div>
<div class="t" style="left:11.0px;top:1312.1px;width:36px;text-align:center;font-size:17px;color:#fff">44</div>
<div class="a" style="left:11px;top:1352px;width:36px;height:1px;background:#3a3a3a"></div>
<div class="t" style="left:11.0px;top:1334.1px;width:36px;text-align:center;font-size:17px;color:#fff">45</div>
<div class="a" style="left:11px;top:1375px;width:36px;height:1px;background:#3a3a3a"></div>
<div class="t" style="left:11.0px;top:1357.1px;width:36px;text-align:center;font-size:17px;color:#fff">46</div>
<div class="a" style="left:11px;top:1398px;width:36px;height:1px;background:#3a3a3a"></div>
<div class="t" style="left:11.0px;top:1380.1px;width:36px;text-align:center;font-size:17px;color:#fff">47</div>
<div class="a" style="left:11px;top:1421px;width:36px;height:1px;background:#3a3a3a"></div>
<div class="t" style="left:11.0px;top:1403.1px;width:36px;text-align:center;font-size:17px;color:#fff">48</div>
<div class="a" style="left:11px;top:1444px;width:36px;height:1px;background:#3a3a3a"></div>
<div class="t" style="left:11.0px;top:1426.1px;width:36px;text-align:center;font-size:17px;color:#fff">49</div>
<div class="a" style="left:11px;top:1467px;width:36px;height:1px;background:#3a3a3a"></div>
<div class="t" style="left:11.0px;top:1449.1px;width:36px;text-align:center;font-size:17px;color:#fff">50</div>
<div class="a" style="left:11px;top:1490px;width:36px;height:1px;background:#3a3a3a"></div>
<div class="t" style="left:11.0px;top:1472.1px;width:36px;text-align:center;font-size:17px;color:#fff">51</div>
<div class="a" style="left:11px;top:1513px;width:36px;height:1px;background:#3a3a3a"></div>
<div class="t" style="left:11.0px;top:1495.1px;width:36px;text-align:center;font-size:17px;color:#fff">52</div>
<div class="a" style="left:11px;top:1536px;width:36px;height:1px;background:#3a3a3a"></div>
<div class="t" style="left:11.0px;top:1518.1px;width:36px;text-align:center;font-size:17px;color:#fff">53</div>
<div class="a" style="left:11px;top:1560px;width:36px;height:1px;background:#3a3a3a"></div>
<div class="t" style="left:11.0px;top:1542.1px;width:36px;text-align:center;font-size:17px;color:#fff">54</div>
<div class="a" style="left:11px;top:1595px;width:36px;height:1px;background:#3a3a3a"></div>
<div class="t" style="left:11.0px;top:1577.1px;width:36px;text-align:center;font-size:17px;color:#fff">55</div>
<div class="a" style="left:11px;top:1600px;width:36px;height:1px;background:#3a3a3a"></div>
<div class="a" style="left:11px;top:1624px;width:36px;height:1px;background:#3a3a3a"></div>
<div class="t" style="left:11.0px;top:1606.1px;width:36px;text-align:center;font-size:17px;color:#fff">57</div>
<div class="a" style="left:11px;top:1628px;width:36px;height:1px;background:#3a3a3a"></div>
<div class="a" style="left:11px;top:1651px;width:36px;height:1px;background:#3a3a3a"></div>
<div class="t" style="left:11.0px;top:1633.1px;width:36px;text-align:center;font-size:17px;color:#fff">59</div>
<div class="a" style="left:11px;top:1669px;width:36px;height:1px;background:#3a3a3a"></div>
<div class="t" style="left:11.0px;top:1656.1px;width:36px;text-align:center;font-size:17px;color:#fff">60</div>
<div class="a" style="left:46px;top:300px;width:1px;height:1370px;background:#4a4a4a"></div>
<div class="a" style="left:47px;top:300px;width:2813px;height:1370px;background:#fff"></div>
<div class="a" style="left:47px;top:300px;width:2px;height:38px;background:#1e8a4a"></div>
<div class="a" style="left:47px;top:427px;width:2813px;height:1px;background:#9a9a9a"></div>
<div class="a" style="left:2860px;top:278px;width:30px;height:1392px;background:#141414"></div>
<svg style="left:2868px;top:284px" width="16" height="13"><path d="M1 12 L8 1.5 L15 12 Z" fill="#9a9a9a" stroke="#9a9a9a" stroke-width="1.5" stroke-linejoin="round"/></svg>
<div class="a" style="left:2870px;top:304px;width:12px;height:530px;background:#9e9e9e;border-radius:6px"></div>
<div class="a" style="left:2862px;top:1647px;width:28px;height:28px;background:#1e1e1e;border-radius:14px"></div>
<svg style="left:2868px;top:1654px" width="16" height="13"><path d="M1 1 L8 11.5 L15 1 Z" fill="#9a9a9a" stroke="#9a9a9a" stroke-width="1.5" stroke-linejoin="round"/></svg>
<div class="a" style="left:47px;top:300px;width:2813px;height:1370px;overflow:hidden">
<div class="t" style="left:29.5px;top:4.8px;font-size:31px;transform:scaleX(1.08);transform-origin:0 0;font-weight:bold;color:#222">Financial Statements Summary</div>
<div class="t" style="left:29.0px;top:42.3px;font-size:27px;transform:scaleX(1.07);transform-origin:0 0;font-weight:bold;color:#000">ABC Company Inc.</div>
<div class="t" style="left:27.5px;top:77.1px;font-size:19.5px;transform:scaleX(0.952);transform-origin:0 0;font-weight:bold;color:#2160e0;text-decoration:underline">Go to Table of Contents</div>
<div class="t" style="right:1159.0px;top:76.8px;font-size:21.5px;transform:scaleX(1.015);transform-origin:100% 0;font-weight:bold;color:#222">Select reporting year</div>
<div class="a" style="left:1676px;top:70px;width:275px;height:33px;background:#fff066;border:1px solid #e6d870"></div>
<div class="t" style="left:1714.0px;top:76.8px;width:200px;text-align:center;font-size:21.5px;font-weight:bold;color:#222">2026</div>
<div class="a" style="left:23px;top:128px;width:1075px;height:35px;background:#4b50d3"></div>
<div class="t" style="left:23.0px;top:132.2px;width:1075px;text-align:center;font-size:27.5px;transform:scaleX(1.123);transform-origin:50% 0;font-weight:bold;color:#fff">Income Statement ($'000) - 5 years to December 2030</div>
<div class="a" style="left:1128px;top:128px;width:1645px;height:35px;background:#4b50d3"></div>
<div class="t" style="left:1128.0px;top:132.2px;width:1645px;text-align:center;font-size:27.5px;transform:scaleX(1.152);transform-origin:50% 0;font-weight:bold;color:#fff">Income Statement ($'000) - 2026</div>
<div class="a" style="left:24px;top:168px;width:473px;height:22px;background:#6c71e6"></div>
<div class="t" style="left:35.0px;top:169.8px;font-size:18.5px;transform:scaleX(1.035);transform-origin:0 0;font-weight:bold;color:#fff">Year Ending</div>
<div class="a" style="left:497px;top:168px;width:120px;height:22px;background:#6c71e6"></div>
<div class="t" style="left:497.0px;top:169.8px;width:120px;text-align:center;font-size:18.5px;transform:scaleX(1.06);transform-origin:50% 0;font-weight:bold;color:#fff">2026</div>
<div class="a" style="left:617px;top:168px;width:120px;height:22px;background:#6c71e6"></div>
<div class="t" style="left:617.0px;top:169.8px;width:120px;text-align:center;font-size:18.5px;transform:scaleX(1.06);transform-origin:50% 0;font-weight:bold;color:#fff">2027</div>
<div class="a" style="left:737px;top:168px;width:120px;height:22px;background:#6c71e6"></div>
<div class="t" style="left:737.0px;top:169.8px;width:120px;text-align:center;font-size:18.5px;transform:scaleX(1.06);transform-origin:50% 0;font-weight:bold;color:#fff">2028</div>
<div class="a" style="left:857px;top:168px;width:120px;height:22px;background:#6c71e6"></div>
<div class="t" style="left:857.0px;top:169.8px;width:120px;text-align:center;font-size:18.5px;transform:scaleX(1.06);transform-origin:50% 0;font-weight:bold;color:#fff">2029</div>
<div class="a" style="left:977px;top:168px;width:120px;height:22px;background:#6c71e6"></div>
<div class="t" style="left:977.0px;top:169.8px;width:120px;text-align:center;font-size:18.5px;transform:scaleX(1.06);transform-origin:50% 0;font-weight:bold;color:#fff">2030</div>
<div class="a" style="left:497px;top:168px;width:1px;height:22px;background:#fff"></div>
<div class="a" style="left:617px;top:168px;width:1px;height:22px;background:#fff"></div>
<div class="a" style="left:737px;top:168px;width:1px;height:22px;background:#fff"></div>
<div class="a" style="left:857px;top:168px;width:1px;height:22px;background:#fff"></div>
<div class="a" style="left:977px;top:168px;width:1px;height:22px;background:#fff"></div>
<div class="a" style="left:1129px;top:168px;width:136px;height:22px;background:#6c71e6"></div>
<div class="t" style="left:1129.0px;top:169.8px;width:136px;text-align:center;font-size:18.5px;transform:scaleX(0.975);transform-origin:50% 0;font-weight:bold;color:#fff">Jan</div>
<div class="a" style="left:1265px;top:168px;width:137px;height:22px;background:#6c71e6"></div>
<div class="t" style="left:1265.0px;top:169.8px;width:137px;text-align:center;font-size:18.5px;transform:scaleX(0.975);transform-origin:50% 0;font-weight:bold;color:#fff">Feb</div>
<div class="a" style="left:1402px;top:168px;width:137px;height:22px;background:#6c71e6"></div>
<div class="t" style="left:1402.0px;top:169.8px;width:137px;text-align:center;font-size:18.5px;transform:scaleX(0.975);transform-origin:50% 0;font-weight:bold;color:#fff">Mar</div>
<div class="a" style="left:1539px;top:168px;width:137px;height:22px;background:#6c71e6"></div>
<div class="t" style="left:1539.0px;top:169.8px;width:137px;text-align:center;font-size:18.5px;transform:scaleX(0.975);transform-origin:50% 0;font-weight:bold;color:#fff">Apr</div>
<div class="a" style="left:1676px;top:168px;width:137px;height:22px;background:#6c71e6"></div>
<div class="t" style="left:1676.0px;top:169.8px;width:137px;text-align:center;font-size:18.5px;transform:scaleX(0.975);transform-origin:50% 0;font-weight:bold;color:#fff">May</div>
<div class="a" style="left:1813px;top:168px;width:137px;height:22px;background:#6c71e6"></div>
<div class="t" style="left:1813.0px;top:169.8px;width:137px;text-align:center;font-size:18.5px;transform:scaleX(0.975);transform-origin:50% 0;font-weight:bold;color:#fff">Jun</div>
<div class="a" style="left:1950px;top:168px;width:137px;height:22px;background:#6c71e6"></div>
<div class="t" style="left:1950.0px;top:169.8px;width:137px;text-align:center;font-size:18.5px;transform:scaleX(0.975);transform-origin:50% 0;font-weight:bold;color:#fff">Jul</div>
<div class="a" style="left:2087px;top:168px;width:137px;height:22px;background:#6c71e6"></div>
<div class="t" style="left:2087.0px;top:169.8px;width:137px;text-align:center;font-size:18.5px;transform:scaleX(0.975);transform-origin:50% 0;font-weight:bold;color:#fff">Aug</div>
<div class="a" style="left:2224px;top:168px;width:137px;height:22px;background:#6c71e6"></div>
<div class="t" style="left:2224.0px;top:169.8px;width:137px;text-align:center;font-size:18.5px;transform:scaleX(0.975);transform-origin:50% 0;font-weight:bold;color:#fff">Sep</div>
<div class="a" style="left:2361px;top:168px;width:137px;height:22px;background:#6c71e6"></div>
<div class="t" style="left:2361.0px;top:169.8px;width:137px;text-align:center;font-size:18.5px;transform:scaleX(0.975);transform-origin:50% 0;font-weight:bold;color:#fff">Oct</div>
<div class="a" style="left:2498px;top:168px;width:137px;height:22px;background:#6c71e6"></div>
<div class="t" style="left:2498.0px;top:169.8px;width:137px;text-align:center;font-size:18.5px;transform:scaleX(0.975);transform-origin:50% 0;font-weight:bold;color:#fff">Nov</div>
<div class="a" style="left:2635px;top:168px;width:137px;height:22px;background:#6c71e6"></div>
<div class="t" style="left:2635.0px;top:169.8px;width:137px;text-align:center;font-size:18.5px;transform:scaleX(0.975);transform-origin:50% 0;font-weight:bold;color:#fff">Dec</div>
<div class="a" style="left:1265px;top:168px;width:1px;height:22px;background:#fff"></div>
<div class="a" style="left:1402px;top:168px;width:1px;height:22px;background:#fff"></div>
<div class="a" style="left:1539px;top:168px;width:1px;height:22px;background:#fff"></div>
<div class="a" style="left:1676px;top:168px;width:1px;height:22px;background:#fff"></div>
<div class="a" style="left:1813px;top:168px;width:1px;height:22px;background:#fff"></div>
<div class="a" style="left:1950px;top:168px;width:1px;height:22px;background:#fff"></div>
<div class="a" style="left:2087px;top:168px;width:1px;height:22px;background:#fff"></div>
<div class="a" style="left:2224px;top:168px;width:1px;height:22px;background:#fff"></div>
<div class="a" style="left:2361px;top:168px;width:1px;height:22px;background:#fff"></div>
<div class="a" style="left:2498px;top:168px;width:1px;height:22px;background:#fff"></div>
<div class="a" style="left:2635px;top:168px;width:1px;height:22px;background:#fff"></div>
<div class="t" style="left:27.0px;top:195.0px;font-size:17.5px;color:#111">Revenue</div>
<div class="t" style="right:2205.5px;top:195.0px;font-size:17.5px;transform:scaleX(1.1);transform-origin:100% 0;color:#111">80</div>
<div class="t" style="right:2085.5px;top:195.0px;font-size:17.5px;transform:scaleX(1.1);transform-origin:100% 0;color:#111">237</div>
<div class="t" style="right:1965.5px;top:195.0px;font-size:17.5px;transform:scaleX(1.1);transform-origin:100% 0;color:#111">450</div>
<div class="t" style="right:1845.5px;top:195.0px;font-size:17.5px;transform:scaleX(1.1);transform-origin:100% 0;color:#111">1,113</div>
<div class="t" style="right:1725.5px;top:195.0px;font-size:17.5px;transform:scaleX(1.1);transform-origin:100% 0;color:#111">1,694</div>
<div class="t" style="right:1557.5px;top:195.0px;font-size:17.5px;transform:scaleX(1.1);transform-origin:100% 0;color:#111">1</div>
<div class="t" style="right:1420.5px;top:195.0px;font-size:17.5px;transform:scaleX(1.1);transform-origin:100% 0;color:#111">3</div>
<div class="t" style="right:1283.5px;top:195.0px;font-size:17.5px;transform:scaleX(1.1);transform-origin:100% 0;color:#111">4</div>
<div class="t" style="right:1146.5px;top:195.0px;font-size:17.5px;transform:scaleX(1.1);transform-origin:100% 0;color:#111">5</div>
<div class="t" style="right:1009.5px;top:195.0px;font-size:17.5px;transform:scaleX(1.1);transform-origin:100% 0;color:#111">6</div>
<div class="t" style="right:872.5px;top:195.0px;font-size:17.5px;transform:scaleX(1.1);transform-origin:100% 0;color:#111">7</div>
<div class="t" style="right:735.5px;top:195.0px;font-size:17.5px;transform:scaleX(1.1);transform-origin:100% 0;color:#111">7</div>
<div class="t" style="right:598.5px;top:195.0px;font-size:17.5px;transform:scaleX(1.1);transform-origin:100% 0;color:#111">8</div>
<div class="t" style="right:461.5px;top:195.0px;font-size:17.5px;transform:scaleX(1.1);transform-origin:100% 0;color:#111">9</div>
<div class="t" style="right:324.5px;top:195.0px;font-size:17.5px;transform:scaleX(1.1);transform-origin:100% 0;color:#111">10</div>
<div class="t" style="right:187.5px;top:195.0px;font-size:17.5px;transform:scaleX(1.1);transform-origin:100% 0;color:#111">10</div>
<div class="t" style="right:50.5px;top:195.0px;font-size:17.5px;transform:scaleX(1.1);transform-origin:100% 0;color:#111">11</div>
<div class="t" style="left:45.0px;top:218.0px;font-size:17.5px;transform:scaleX(1.045);transform-origin:0 0;color:#111;font-style:italic">Growth %</div>
<div class="t" style="right:2085.5px;top:218.0px;font-size:17.5px;transform:scaleX(1.1);transform-origin:100% 0;color:#111;font-style:italic">195%</div>
<div class="t" style="right:1965.5px;top:218.0px;font-size:17.5px;transform:scaleX(1.1);transform-origin:100% 0;color:#111;font-style:italic">90%</div>
<div class="t" style="right:1845.5px;top:218.0px;font-size:17.5px;transform:scaleX(1.1);transform-origin:100% 0;color:#111;font-style:italic">147%</div>
<div class="t" style="right:1725.5px;top:218.0px;font-size:17.5px;transform:scaleX(1.1);transform-origin:100% 0;color:#111;font-style:italic">52%</div>
<div class="t" style="right:1561.0px;top:218.0px;font-size:17.5px;transform:scaleX(1.1);transform-origin:100% 0;color:#111;font-style:italic">-</div>
<div class="t" style="right:1420.5px;top:218.0px;font-size:17.5px;transform:scaleX(1.1);transform-origin:100% 0;color:#111;font-style:italic">123%</div>
<div class="t" style="right:1283.5px;top:218.0px;font-size:17.5px;transform:scaleX(1.1);transform-origin:100% 0;color:#111;font-style:italic">66%</div>
<div class="t" style="right:1146.5px;top:218.0px;font-size:17.5px;transform:scaleX(1.1);transform-origin:100% 0;color:#111;font-style:italic">19%</div>
<div class="t" style="right:1009.5px;top:218.0px;font-size:17.5px;transform:scaleX(1.1);transform-origin:100% 0;color:#111;font-style:italic">16%</div>
<div class="t" style="right:872.5px;top:218.0px;font-size:17.5px;transform:scaleX(1.1);transform-origin:100% 0;color:#111;font-style:italic">14%</div>
<div class="t" style="right:735.5px;top:218.0px;font-size:17.5px;transform:scaleX(1.1);transform-origin:100% 0;color:#111;font-style:italic">12%</div>
<div class="t" style="right:598.5px;top:218.0px;font-size:17.5px;transform:scaleX(1.1);transform-origin:100% 0;color:#111;font-style:italic">11%</div>
<div class="t" style="right:461.5px;top:218.0px;font-size:17.5px;transform:scaleX(1.1);transform-origin:100% 0;color:#111;font-style:italic">10%</div>
<div class="t" style="right:324.5px;top:218.0px;font-size:17.5px;transform:scaleX(1.1);transform-origin:100% 0;color:#111;font-style:italic">9%</div>
<div class="t" style="right:187.5px;top:218.0px;font-size:17.5px;transform:scaleX(1.1);transform-origin:100% 0;color:#111;font-style:italic">8%</div>
<div class="t" style="right:50.5px;top:218.0px;font-size:17.5px;transform:scaleX(1.1);transform-origin:100% 0;color:#111;font-style:italic">8%</div>
<div class="t" style="left:27.0px;top:241.0px;font-size:17.5px;color:#111">COGS</div>
<div class="t" style="right:2199.5px;top:241.0px;font-size:17.5px;transform:scaleX(1.1);transform-origin:100% 0;color:#111">(10)</div>
<div class="t" style="right:2079.5px;top:241.0px;font-size:17.5px;transform:scaleX(1.1);transform-origin:100% 0;color:#111">(27)</div>
<div class="t" style="right:1959.5px;top:241.0px;font-size:17.5px;transform:scaleX(1.1);transform-origin:100% 0;color:#111">(47)</div>
<div class="t" style="right:1839.5px;top:241.0px;font-size:17.5px;transform:scaleX(1.1);transform-origin:100% 0;color:#111">(108)</div>
<div class="t" style="right:1719.5px;top:241.0px;font-size:17.5px;transform:scaleX(1.1);transform-origin:100% 0;color:#111">(152)</div>
<div class="t" style="right:1551.5px;top:241.0px;font-size:17.5px;transform:scaleX(1.1);transform-origin:100% 0;color:#111">(0)</div>
<div class="t" style="right:1414.5px;top:241.0px;font-size:17.5px;transform:scaleX(1.1);transform-origin:100% 0;color:#111">(0)</div>
<div class="t" style="right:1277.5px;top:241.0px;font-size:17.5px;transform:scaleX(1.1);transform-origin:100% 0;color:#111">(0)</div>
<div class="t" style="right:1140.5px;top:241.0px;font-size:17.5px;transform:scaleX(1.1);transform-origin:100% 0;color:#111">(1)</div>
<div class="t" style="right:1003.5px;top:241.0px;font-size:17.5px;transform:scaleX(1.1);transform-origin:100% 0;color:#111">(1)</div>
<div class="t" style="right:866.5px;top:241.0px;font-size:17.5px;transform:scaleX(1.1);transform-origin:100% 0;color:#111">(1)</div>
<div class="t" style="right:729.5px;top:241.0px;font-size:17.5px;transform:scaleX(1.1);transform-origin:100% 0;color:#111">(1)</div>
<div class="t" style="right:592.5px;top:241.0px;font-size:17.5px;transform:scaleX(1.1);transform-origin:100% 0;color:#111">(1)</div>
<div class="t" style="right:455.5px;top:241.0px;font-size:17.5px;transform:scaleX(1.1);transform-origin:100% 0;color:#111">(1)</div>
<div class="t" style="right:318.5px;top:241.0px;font-size:17.5px;transform:scaleX(1.1);transform-origin:100% 0;color:#111">(1)</div>
<div class="t" style="right:181.5px;top:241.0px;font-size:17.5px;transform:scaleX(1.1);transform-origin:100% 0;color:#111">(1)</div>
<div class="t" style="right:44.5px;top:241.0px;font-size:17.5px;transform:scaleX(1.1);transform-origin:100% 0;color:#111">(1)</div>
<div class="t" style="left:45.0px;top:264.0px;font-size:17.5px;transform:scaleX(1.045);transform-origin:0 0;color:#111;font-style:italic">% of Revenue</div>
<div class="t" style="right:2199.5px;top:264.0px;font-size:17.5px;transform:scaleX(1.1);transform-origin:100% 0;color:#111;font-style:italic">(12%)</div>
<div class="t" style="right:2079.5px;top:264.0px;font-size:17.5px;transform:scaleX(1.1);transform-origin:100% 0;color:#111;font-style:italic">(11%)</div>
<div class="t" style="right:1959.5px;top:264.0px;font-size:17.5px;transform:scaleX(1.1);transform-origin:100% 0;color:#111;font-style:italic">(11%)</div>
<div class="t" style="right:1839.5px;top:264.0px;font-size:17.5px;transform:scaleX(1.1);transform-origin:100% 0;color:#111;font-style:italic">(10%)</div>
<div class="t" style="right:1719.5px;top:264.0px;font-size:17.5px;transform:scaleX(1.1);transform-origin:100% 0;color:#111;font-style:italic">(9%)</div>
<div class="t" style="right:1551.5px;top:264.0px;font-size:17.5px;transform:scaleX(1.1);transform-origin:100% 0;color:#111;font-style:italic">(12%)</div>
<div class="t" style="right:1414.5px;top:264.0px;font-size:17.5px;transform:scaleX(1.1);transform-origin:100% 0;color:#111;font-style:italic">(12%)</div>
<div class="t" style="right:1277.5px;top:264.0px;font-size:17.5px;transform:scaleX(1.1);transform-origin:100% 0;color:#111;font-style:italic">(12%)</div>
<div class="t" style="right:1140.5px;top:264.0px;font-size:17.5px;transform:scaleX(1.1);transform-origin:100% 0;color:#111;font-style:italic">(12%)</div>
<div class="t" style="right:1003.5px;top:264.0px;font-size:17.5px;transform:scaleX(1.1);transform-origin:100% 0;color:#111;font-style:italic">(12%)</div>
<div class="t" style="right:866.5px;top:264.0px;font-size:17.5px;transform:scaleX(1.1);transform-origin:100% 0;color:#111;font-style:italic">(12%)</div>
<div class="t" style="right:729.5px;top:264.0px;font-size:17.5px;transform:scaleX(1.1);transform-origin:100% 0;color:#111;font-style:italic">(12%)</div>
<div class="t" style="right:592.5px;top:264.0px;font-size:17.5px;transform:scaleX(1.1);transform-origin:100% 0;color:#111;font-style:italic">(12%)</div>
<div class="t" style="right:455.5px;top:264.0px;font-size:17.5px;transform:scaleX(1.1);transform-origin:100% 0;color:#111;font-style:italic">(12%)</div>
<div class="t" style="right:318.5px;top:264.0px;font-size:17.5px;transform:scaleX(1.1);transform-origin:100% 0;color:#111;font-style:italic">(12%)</div>
<div class="t" style="right:181.5px;top:264.0px;font-size:17.5px;transform:scaleX(1.1);transform-origin:100% 0;color:#111;font-style:italic">(12%)</div>
<div class="t" style="right:44.5px;top:264.0px;font-size:17.5px;transform:scaleX(1.1);transform-origin:100% 0;color:#111;font-style:italic">(12%)</div>
<div class="a" style="left:23px;top:282px;width:1075px;height:26px;background:#4ab0e6"></div>
<div class="a" style="left:1128px;top:282px;width:1645px;height:26px;background:#4ab0e6"></div>
<div class="t" style="left:38.5px;top:285.7px;font-size:21px;transform:scaleX(1.045);transform-origin:0 0;font-weight:bold;color:#fff">Gross Margin</div>
<div class="t" style="right:2205.5px;top:287.1px;font-size:17px;transform:scaleX(1.18);transform-origin:100% 0;font-weight:bold;color:#fff">71</div>
<div class="t" style="right:2085.5px;top:287.1px;font-size:17px;transform:scaleX(1.18);transform-origin:100% 0;font-weight:bold;color:#fff">210</div>
<div class="t" style="right:1965.5px;top:287.1px;font-size:17px;transform:scaleX(1.18);transform-origin:100% 0;font-weight:bold;color:#fff">403</div>
<div class="t" style="right:1845.5px;top:287.1px;font-size:17px;transform:scaleX(1.18);transform-origin:100% 0;font-weight:bold;color:#fff">1,005</div>
<div class="t" style="right:1725.5px;top:287.1px;font-size:17px;transform:scaleX(1.18);transform-origin:100% 0;font-weight:bold;color:#fff">1,541</div>
<div class="t" style="right:1557.5px;top:287.1px;font-size:17px;transform:scaleX(1.18);transform-origin:100% 0;font-weight:bold;color:#fff">1</div>
<div class="t" style="right:1420.5px;top:287.1px;font-size:17px;transform:scaleX(1.18);transform-origin:100% 0;font-weight:bold;color:#fff">2</div>
<div class="t" style="right:1283.5px;top:287.1px;font-size:17px;transform:scaleX(1.18);transform-origin:100% 0;font-weight:bold;color:#fff">4</div>
<div class="t" style="right:1146.5px;top:287.1px;font-size:17px;transform:scaleX(1.18);transform-origin:100% 0;font-weight:bold;color:#fff">4</div>
<div class="t" style="right:1009.5px;top:287.1px;font-size:17px;transform:scaleX(1.18);transform-origin:100% 0;font-weight:bold;color:#fff">5</div>
<div class="t" style="right:872.5px;top:287.1px;font-size:17px;transform:scaleX(1.18);transform-origin:100% 0;font-weight:bold;color:#fff">6</div>
<div class="t" style="right:735.5px;top:287.1px;font-size:17px;transform:scaleX(1.18);transform-origin:100% 0;font-weight:bold;color:#fff">6</div>
<div class="t" style="right:598.5px;top:287.1px;font-size:17px;transform:scaleX(1.18);transform-origin:100% 0;font-weight:bold;color:#fff">7</div>
<div class="t" style="right:461.5px;top:287.1px;font-size:17px;transform:scaleX(1.18);transform-origin:100% 0;font-weight:bold;color:#fff">8</div>
<div class="t" style="right:324.5px;top:287.1px;font-size:17px;transform:scaleX(1.18);transform-origin:100% 0;font-weight:bold;color:#fff">8</div>
<div class="t" style="right:187.5px;top:287.1px;font-size:17px;transform:scaleX(1.18);transform-origin:100% 0;font-weight:bold;color:#fff">9</div>
<div class="t" style="right:50.5px;top:287.1px;font-size:17px;transform:scaleX(1.18);transform-origin:100% 0;font-weight:bold;color:#fff">10</div>
<div class="t" style="left:45.0px;top:313.0px;font-size:17.5px;transform:scaleX(1.045);transform-origin:0 0;color:#111;font-style:italic">Gross Margin %</div>
<div class="t" style="right:2205.5px;top:313.0px;font-size:17.5px;transform:scaleX(1.1);transform-origin:100% 0;color:#111;font-style:italic">88%</div>
<div class="t" style="right:2085.5px;top:313.0px;font-size:17.5px;transform:scaleX(1.1);transform-origin:100% 0;color:#111;font-style:italic">89%</div>
<div class="t" style="right:1965.5px;top:313.0px;font-size:17.5px;transform:scaleX(1.1);transform-origin:100% 0;color:#111;font-style:italic">90%</div>
<div class="t" style="right:1845.5px;top:313.0px;font-size:17.5px;transform:scaleX(1.1);transform-origin:100% 0;color:#111;font-style:italic">90%</div>
<div class="t" style="right:1725.5px;top:313.0px;font-size:17.5px;transform:scaleX(1.1);transform-origin:100% 0;color:#111;font-style:italic">91%</div>
<div class="t" style="right:1557.5px;top:313.0px;font-size:17.5px;transform:scaleX(1.1);transform-origin:100% 0;color:#111;font-style:italic">88%</div>
<div class="t" style="right:1420.5px;top:313.0px;font-size:17.5px;transform:scaleX(1.1);transform-origin:100% 0;color:#111;font-style:italic">88%</div>
<div class="t" style="right:1283.5px;top:313.0px;font-size:17.5px;transform:scaleX(1.1);transform-origin:100% 0;color:#111;font-style:italic">88%</div>
<div class="t" style="right:1146.5px;top:313.0px;font-size:17.5px;transform:scaleX(1.1);transform-origin:100% 0;color:#111;font-style:italic">88%</div>
<div class="t" style="right:1009.5px;top:313.0px;font-size:17.5px;transform:scaleX(1.1);transform-origin:100% 0;color:#111;font-style:italic">88%</div>
<div class="t" style="right:872.5px;top:313.0px;font-size:17.5px;transform:scaleX(1.1);transform-origin:100% 0;color:#111;font-style:italic">88%</div>
<div class="t" style="right:735.5px;top:313.0px;font-size:17.5px;transform:scaleX(1.1);transform-origin:100% 0;color:#111;font-style:italic">88%</div>
<div class="t" style="right:598.5px;top:313.0px;font-size:17.5px;transform:scaleX(1.1);transform-origin:100% 0;color:#111;font-style:italic">88%</div>
<div class="t" style="right:461.5px;top:313.0px;font-size:17.5px;transform:scaleX(1.1);transform-origin:100% 0;color:#111;font-style:italic">88%</div>
<div class="t" style="right:324.5px;top:313.0px;font-size:17.5px;transform:scaleX(1.1);transform-origin:100% 0;color:#111;font-style:italic">88%</div>
<div class="t" style="right:187.5px;top:313.0px;font-size:17.5px;transform:scaleX(1.1);transform-origin:100% 0;color:#111;font-style:italic">88%</div>
<div class="t" style="right:50.5px;top:313.0px;font-size:17.5px;transform:scaleX(1.1);transform-origin:100% 0;color:#111;font-style:italic">88%</div>
<div class="t" style="left:27.0px;top:336.0px;font-size:17.5px;color:#111">Variable Expenses</div>
<div class="t" style="right:2199.5px;top:336.0px;font-size:17.5px;transform:scaleX(1.1);transform-origin:100% 0;color:#111">(4)</div>
<div class="t" style="right:2079.5px;top:336.0px;font-size:17.5px;transform:scaleX(1.1);transform-origin:100% 0;color:#111">(12)</div>
<div class="t" style="right:1959.5px;top:336.0px;font-size:17.5px;transform:scaleX(1.1);transform-origin:100% 0;color:#111">(22)</div>
<div class="t" style="right:1839.5px;top:336.0px;font-size:17.5px;transform:scaleX(1.1);transform-origin:100% 0;color:#111">(49)</div>
<div class="t" style="right:1719.5px;top:336.0px;font-size:17.5px;transform:scaleX(1.1);transform-origin:100% 0;color:#111">(68)</div>
<div class="t" style="right:1551.5px;top:336.0px;font-size:17.5px;transform:scaleX(1.1);transform-origin:100% 0;color:#111">(0)</div>
<div class="t" style="right:1414.5px;top:336.0px;font-size:17.5px;transform:scaleX(1.1);transform-origin:100% 0;color:#111">(0)</div>
<div class="t" style="right:1277.5px;top:336.0px;font-size:17.5px;transform:scaleX(1.1);transform-origin:100% 0;color:#111">(0)</div>
<div class="t" style="right:1140.5px;top:336.0px;font-size:17.5px;transform:scaleX(1.1);transform-origin:100% 0;color:#111">(0)</div>
<div class="t" style="right:1003.5px;top:336.0px;font-size:17.5px;transform:scaleX(1.1);transform-origin:100% 0;color:#111">(0)</div>
<div class="t" style="right:866.5px;top:336.0px;font-size:17.5px;transform:scaleX(1.1);transform-origin:100% 0;color:#111">(0)</div>
<div class="t" style="right:729.5px;top:336.0px;font-size:17.5px;transform:scaleX(1.1);transform-origin:100% 0;color:#111">(0)</div>
<div class="t" style="right:592.5px;top:336.0px;font-size:17.5px;transform:scaleX(1.1);transform-origin:100% 0;color:#111">(0)</div>
<div class="t" style="right:455.5px;top:336.0px;font-size:17.5px;transform:scaleX(1.1);transform-origin:100% 0;color:#111">(0)</div>
<div class="t" style="right:318.5px;top:336.0px;font-size:17.5px;transform:scaleX(1.1);transform-origin:100% 0;color:#111">(1)</div>
<div class="t" style="right:181.5px;top:336.0px;font-size:17.5px;transform:scaleX(1.1);transform-origin:100% 0;color:#111">(1)</div>
<div class="t" style="right:44.5px;top:336.0px;font-size:17.5px;transform:scaleX(1.1);transform-origin:100% 0;color:#111">(1)</div>
<div class="t" style="left:45.0px;top:359.0px;font-size:17.5px;transform:scaleX(1.045);transform-origin:0 0;color:#111;font-style:italic">% of Revenue</div>
<div class="t" style="right:2199.5px;top:359.0px;font-size:17.5px;transform:scaleX(1.1);transform-origin:100% 0;color:#111;font-style:italic">(6%)</div>
<div class="t" style="right:2079.5px;top:359.0px;font-size:17.5px;transform:scaleX(1.1);transform-origin:100% 0;color:#111;font-style:italic">(5%)</div>
<div class="t" style="right:1959.5px;top:359.0px;font-size:17.5px;transform:scaleX(1.1);transform-origin:100% 0;color:#111;font-style:italic">(5%)</div>
<div class="t" style="right:1839.5px;top:359.0px;font-size:17.5px;transform:scaleX(1.1);transform-origin:100% 0;color:#111;font-style:italic">(4%)</div>
<div class="t" style="right:1719.5px;top:359.0px;font-size:17.5px;transform:scaleX(1.1);transform-origin:100% 0;color:#111;font-style:italic">(4%)</div>
<div class="t" style="right:1551.5px;top:359.0px;font-size:17.5px;transform:scaleX(1.1);transform-origin:100% 0;color:#111;font-style:italic">(6%)</div>
<div class="t" style="right:1414.5px;top:359.0px;font-size:17.5px;transform:scaleX(1.1);transform-origin:100% 0;color:#111;font-style:italic">(6%)</div>
<div class="t" style="right:1277.5px;top:359.0px;font-size:17.5px;transform:scaleX(1.1);transform-origin:100% 0;color:#111;font-style:italic">(6%)</div>
<div class="t" style="right:1140.5px;top:359.0px;font-size:17.5px;transform:scaleX(1.1);transform-origin:100% 0;color:#111;font-style:italic">(6%)</div>
<div class="t" style="right:1003.5px;top:359.0px;font-size:17.5px;transform:scaleX(1.1);transform-origin:100% 0;color:#111;font-style:italic">(6%)</div>
<div class="t" style="right:866.5px;top:359.0px;font-size:17.5px;transform:scaleX(1.1);transform-origin:100% 0;color:#111;font-style:italic">(6%)</div>
<div class="t" style="right:729.5px;top:359.0px;font-size:17.5px;transform:scaleX(1.1);transform-origin:100% 0;color:#111;font-style:italic">(6%)</div>
<div class="t" style="right:592.5px;top:359.0px;font-size:17.5px;transform:scaleX(1.1);transform-origin:100% 0;color:#111;font-style:italic">(6%)</div>
<div class="t" style="right:455.5px;top:359.0px;font-size:17.5px;transform:scaleX(1.1);transform-origin:100% 0;color:#111;font-style:italic">(6%)</div>
<div class="t" style="right:318.5px;top:359.0px;font-size:17.5px;transform:scaleX(1.1);transform-origin:100% 0;color:#111;font-style:italic">(6%)</div>
<div class="t" style="right:181.5px;top:359.0px;font-size:17.5px;transform:scaleX(1.1);transform-origin:100% 0;color:#111;font-style:italic">(6%)</div>
<div class="t" style="right:44.5px;top:359.0px;font-size:17.5px;transform:scaleX(1.1);transform-origin:100% 0;color:#111;font-style:italic">(6%)</div>
<div class="a" style="left:23px;top:377px;width:1075px;height:26px;background:#4ab0e6"></div>
<div class="a" style="left:1128px;top:377px;width:1645px;height:26px;background:#4ab0e6"></div>
<div class="t" style="left:38.5px;top:380.7px;font-size:21px;transform:scaleX(1.045);transform-origin:0 0;font-weight:bold;color:#fff">Contribution Margin</div>
<div class="t" style="right:2205.5px;top:382.1px;font-size:17px;transform:scaleX(1.18);transform-origin:100% 0;font-weight:bold;color:#fff">66</div>
<div class="t" style="right:2085.5px;top:382.1px;font-size:17px;transform:scaleX(1.18);transform-origin:100% 0;font-weight:bold;color:#fff">198</div>
<div class="t" style="right:1965.5px;top:382.1px;font-size:17px;transform:scaleX(1.18);transform-origin:100% 0;font-weight:bold;color:#fff">381</div>
<div class="t" style="right:1845.5px;top:382.1px;font-size:17px;transform:scaleX(1.18);transform-origin:100% 0;font-weight:bold;color:#fff">956</div>
<div class="t" style="right:1725.5px;top:382.1px;font-size:17px;transform:scaleX(1.18);transform-origin:100% 0;font-weight:bold;color:#fff">1,474</div>
<div class="t" style="right:1557.5px;top:382.1px;font-size:17px;transform:scaleX(1.18);transform-origin:100% 0;font-weight:bold;color:#fff">1</div>
<div class="t" style="right:1420.5px;top:382.1px;font-size:17px;transform:scaleX(1.18);transform-origin:100% 0;font-weight:bold;color:#fff">2</div>
<div class="t" style="right:1283.5px;top:382.1px;font-size:17px;transform:scaleX(1.18);transform-origin:100% 0;font-weight:bold;color:#fff">3</div>
<div class="t" style="right:1146.5px;top:382.1px;font-size:17px;transform:scaleX(1.18);transform-origin:100% 0;font-weight:bold;color:#fff">4</div>
<div class="t" style="right:1009.5px;top:382.1px;font-size:17px;transform:scaleX(1.18);transform-origin:100% 0;font-weight:bold;color:#fff">5</div>
<div class="t" style="right:872.5px;top:382.1px;font-size:17px;transform:scaleX(1.18);transform-origin:100% 0;font-weight:bold;color:#fff">5</div>
<div class="t" style="right:735.5px;top:382.1px;font-size:17px;transform:scaleX(1.18);transform-origin:100% 0;font-weight:bold;color:#fff">6</div>
<div class="t" style="right:598.5px;top:382.1px;font-size:17px;transform:scaleX(1.18);transform-origin:100% 0;font-weight:bold;color:#fff">7</div>
<div class="t" style="right:461.5px;top:382.1px;font-size:17px;transform:scaleX(1.18);transform-origin:100% 0;font-weight:bold;color:#fff">7</div>
<div class="t" style="right:324.5px;top:382.1px;font-size:17px;transform:scaleX(1.18);transform-origin:100% 0;font-weight:bold;color:#fff">8</div>
<div class="t" style="right:187.5px;top:382.1px;font-size:17px;transform:scaleX(1.18);transform-origin:100% 0;font-weight:bold;color:#fff">9</div>
<div class="t" style="right:50.5px;top:382.1px;font-size:17px;transform:scaleX(1.18);transform-origin:100% 0;font-weight:bold;color:#fff">9</div>
<div class="t" style="left:45.0px;top:408.0px;font-size:17.5px;transform:scaleX(1.045);transform-origin:0 0;color:#111;font-style:italic">Contribution Margin %</div>
<div class="t" style="right:2205.5px;top:408.0px;font-size:17.5px;transform:scaleX(1.1);transform-origin:100% 0;color:#111;font-style:italic">83%</div>
<div class="t" style="right:2085.5px;top:408.0px;font-size:17.5px;transform:scaleX(1.1);transform-origin:100% 0;color:#111;font-style:italic">84%</div>
<div class="t" style="right:1965.5px;top:408.0px;font-size:17.5px;transform:scaleX(1.1);transform-origin:100% 0;color:#111;font-style:italic">85%</div>
<div class="t" style="right:1845.5px;top:408.0px;font-size:17.5px;transform:scaleX(1.1);transform-origin:100% 0;color:#111;font-style:italic">86%</div>
<div class="t" style="right:1725.5px;top:408.0px;font-size:17.5px;transform:scaleX(1.1);transform-origin:100% 0;color:#111;font-style:italic">87%</div>
<div class="t" style="right:1557.5px;top:408.0px;font-size:17.5px;transform:scaleX(1.1);transform-origin:100% 0;color:#111;font-style:italic">83%</div>
<div class="t" style="right:1420.5px;top:408.0px;font-size:17.5px;transform:scaleX(1.1);transform-origin:100% 0;color:#111;font-style:italic">83%</div>
<div class="t" style="right:1283.5px;top:408.0px;font-size:17.5px;transform:scaleX(1.1);transform-origin:100% 0;color:#111;font-style:italic">83%</div>
<div class="t" style="right:1146.5px;top:408.0px;font-size:17.5px;transform:scaleX(1.1);transform-origin:100% 0;color:#111;font-style:italic">83%</div>
<div class="t" style="right:1009.5px;top:408.0px;font-size:17.5px;transform:scaleX(1.1);transform-origin:100% 0;color:#111;font-style:italic">83%</div>
<div class="t" style="right:872.5px;top:408.0px;font-size:17.5px;transform:scaleX(1.1);transform-origin:100% 0;color:#111;font-style:italic">83%</div>
<div class="t" style="right:735.5px;top:408.0px;font-size:17.5px;transform:scaleX(1.1);transform-origin:100% 0;color:#111;font-style:italic">83%</div>
<div class="t" style="right:598.5px;top:408.0px;font-size:17.5px;transform:scaleX(1.1);transform-origin:100% 0;color:#111;font-style:italic">83%</div>
<div class="t" style="right:461.5px;top:408.0px;font-size:17.5px;transform:scaleX(1.1);transform-origin:100% 0;color:#111;font-style:italic">83%</div>
<div class="t" style="right:324.5px;top:408.0px;font-size:17.5px;transform:scaleX(1.1);transform-origin:100% 0;color:#111;font-style:italic">83%</div>
<div class="t" style="right:187.5px;top:408.0px;font-size:17.5px;transform:scaleX(1.1);transform-origin:100% 0;color:#111;font-style:italic">83%</div>
<div class="t" style="right:50.5px;top:408.0px;font-size:17.5px;transform:scaleX(1.1);transform-origin:100% 0;color:#111;font-style:italic">83%</div>
<div class="t" style="left:27.0px;top:431.0px;font-size:17.5px;color:#111">Payroll Expenses</div>
<div class="t" style="right:2199.5px;top:431.0px;font-size:17.5px;transform:scaleX(1.1);transform-origin:100% 0;color:#111">(130)</div>
<div class="t" style="right:2079.5px;top:431.0px;font-size:17.5px;transform:scaleX(1.1);transform-origin:100% 0;color:#111">(158)</div>
<div class="t" style="right:1959.5px;top:431.0px;font-size:17.5px;transform:scaleX(1.1);transform-origin:100% 0;color:#111">(199)</div>
<div class="t" style="right:1839.5px;top:431.0px;font-size:17.5px;transform:scaleX(1.1);transform-origin:100% 0;color:#111">(225)</div>
<div class="t" style="right:1719.5px;top:431.0px;font-size:17.5px;transform:scaleX(1.1);transform-origin:100% 0;color:#111">(240)</div>
<div class="t" style="right:1551.5px;top:431.0px;font-size:17.5px;transform:scaleX(1.1);transform-origin:100% 0;color:#111">(11)</div>
<div class="t" style="right:1414.5px;top:431.0px;font-size:17.5px;transform:scaleX(1.1);transform-origin:100% 0;color:#111">(11)</div>
<div class="t" style="right:1277.5px;top:431.0px;font-size:17.5px;transform:scaleX(1.1);transform-origin:100% 0;color:#111">(11)</div>
<div class="t" style="right:1140.5px;top:431.0px;font-size:17.5px;transform:scaleX(1.1);transform-origin:100% 0;color:#111">(11)</div>
<div class="t" style="right:1003.5px;top:431.0px;font-size:17.5px;transform:scaleX(1.1);transform-origin:100% 0;color:#111">(11)</div>
<div class="t" style="right:866.5px;top:431.0px;font-size:17.5px;transform:scaleX(1.1);transform-origin:100% 0;color:#111">(11)</div>
<div class="t" style="right:729.5px;top:431.0px;font-size:17.5px;transform:scaleX(1.1);transform-origin:100% 0;color:#111">(11)</div>
<div class="t" style="right:592.5px;top:431.0px;font-size:17.5px;transform:scaleX(1.1);transform-origin:100% 0;color:#111">(11)</div>
<div class="t" style="right:455.5px;top:431.0px;font-size:17.5px;transform:scaleX(1.1);transform-origin:100% 0;color:#111">(11)</div>
<div class="t" style="right:318.5px;top:431.0px;font-size:17.5px;transform:scaleX(1.1);transform-origin:100% 0;color:#111">(11)</div>
<div class="t" style="right:181.5px;top:431.0px;font-size:17.5px;transform:scaleX(1.1);transform-origin:100% 0;color:#111">(11)</div>
<div class="t" style="right:44.5px;top:431.0px;font-size:17.5px;transform:scaleX(1.1);transform-origin:100% 0;color:#111">(11)</div>
<div class="t" style="left:45.0px;top:454.0px;font-size:17.5px;transform:scaleX(1.045);transform-origin:0 0;color:#111;font-style:italic">% of Revenue</div>
<div class="t" style="right:2199.5px;top:454.0px;font-size:17.5px;transform:scaleX(1.1);transform-origin:100% 0;color:#111;font-style:italic">(162%)</div>
<div class="t" style="right:2079.5px;top:454.0px;font-size:17.5px;transform:scaleX(1.1);transform-origin:100% 0;color:#111;font-style:italic">(66%)</div>
<div class="t" style="right:1959.5px;top:454.0px;font-size:17.5px;transform:scaleX(1.1);transform-origin:100% 0;color:#111;font-style:italic">(44%)</div>
<div class="t" style="right:1839.5px;top:454.0px;font-size:17.5px;transform:scaleX(1.1);transform-origin:100% 0;color:#111;font-style:italic">(20%)</div>
<div class="t" style="right:1719.5px;top:454.0px;font-size:17.5px;transform:scaleX(1.1);transform-origin:100% 0;color:#111;font-style:italic">(14%)</div>
<div class="t" style="right:1551.5px;top:454.0px;font-size:17.5px;transform:scaleX(1.1);transform-origin:100% 0;color:#111;font-style:italic">(961%)</div>
<div class="t" style="right:1414.5px;top:454.0px;font-size:17.5px;transform:scaleX(1.1);transform-origin:100% 0;color:#111;font-style:italic">(431%)</div>
<div class="t" style="right:1277.5px;top:454.0px;font-size:17.5px;transform:scaleX(1.1);transform-origin:100% 0;color:#111;font-style:italic">(260%)</div>
<div class="t" style="right:1140.5px;top:454.0px;font-size:17.5px;transform:scaleX(1.1);transform-origin:100% 0;color:#111;font-style:italic">(219%)</div>
<div class="t" style="right:1003.5px;top:454.0px;font-size:17.5px;transform:scaleX(1.1);transform-origin:100% 0;color:#111;font-style:italic">(189%)</div>
<div class="t" style="right:866.5px;top:454.0px;font-size:17.5px;transform:scaleX(1.1);transform-origin:100% 0;color:#111;font-style:italic">(167%)</div>
<div class="t" style="right:729.5px;top:454.0px;font-size:17.5px;transform:scaleX(1.1);transform-origin:100% 0;color:#111;font-style:italic">(149%)</div>
<div class="t" style="right:592.5px;top:454.0px;font-size:17.5px;transform:scaleX(1.1);transform-origin:100% 0;color:#111;font-style:italic">(134%)</div>
<div class="t" style="right:455.5px;top:454.0px;font-size:17.5px;transform:scaleX(1.1);transform-origin:100% 0;color:#111;font-style:italic">(122%)</div>
<div class="t" style="right:318.5px;top:454.0px;font-size:17.5px;transform:scaleX(1.1);transform-origin:100% 0;color:#111;font-style:italic">(113%)</div>
<div class="t" style="right:181.5px;top:454.0px;font-size:17.5px;transform:scaleX(1.1);transform-origin:100% 0;color:#111;font-style:italic">(104%)</div>
<div class="t" style="right:44.5px;top:454.0px;font-size:17.5px;transform:scaleX(1.1);transform-origin:100% 0;color:#111;font-style:italic">(97%)</div>
<div class="t" style="left:27.0px;top:482.0px;font-size:17.5px;color:#111">Fixed Expenses</div>
<div class="t" style="right:2199.5px;top:482.0px;font-size:17.5px;transform:scaleX(1.1);transform-origin:100% 0;color:#111">(62)</div>
<div class="t" style="right:2079.5px;top:482.0px;font-size:17.5px;transform:scaleX(1.1);transform-origin:100% 0;color:#111">(62)</div>
<div class="t" style="right:1959.5px;top:482.0px;font-size:17.5px;transform:scaleX(1.1);transform-origin:100% 0;color:#111">(62)</div>
<div class="t" style="right:1839.5px;top:482.0px;font-size:17.5px;transform:scaleX(1.1);transform-origin:100% 0;color:#111">(62)</div>
<div class="t" style="right:1719.5px;top:482.0px;font-size:17.5px;transform:scaleX(1.1);transform-origin:100% 0;color:#111">(62)</div>
<div class="t" style="right:1551.5px;top:482.0px;font-size:17.5px;transform:scaleX(1.1);transform-origin:100% 0;color:#111">(5)</div>
<div class="t" style="right:1414.5px;top:482.0px;font-size:17.5px;transform:scaleX(1.1);transform-origin:100% 0;color:#111">(5)</div>
<div class="t" style="right:1277.5px;top:482.0px;font-size:17.5px;transform:scaleX(1.1);transform-origin:100% 0;color:#111">(5)</div>
<div class="t" style="right:1140.5px;top:482.0px;font-size:17.5px;transform:scaleX(1.1);transform-origin:100% 0;color:#111">(5)</div>
<div class="t" style="right:1003.5px;top:482.0px;font-size:17.5px;transform:scaleX(1.1);transform-origin:100% 0;color:#111">(5)</div>
<div class="t" style="right:866.5px;top:482.0px;font-size:17.5px;transform:scaleX(1.1);transform-origin:100% 0;color:#111">(5)</div>
<div class="t" style="right:729.5px;top:482.0px;font-size:17.5px;transform:scaleX(1.1);transform-origin:100% 0;color:#111">(5)</div>
<div class="t" style="right:592.5px;top:482.0px;font-size:17.5px;transform:scaleX(1.1);transform-origin:100% 0;color:#111">(5)</div>
<div class="t" style="right:455.5px;top:482.0px;font-size:17.5px;transform:scaleX(1.1);transform-origin:100% 0;color:#111">(5)</div>
<div class="t" style="right:318.5px;top:482.0px;font-size:17.5px;transform:scaleX(1.1);transform-origin:100% 0;color:#111">(5)</div>
<div class="t" style="right:181.5px;top:482.0px;font-size:17.5px;transform:scaleX(1.1);transform-origin:100% 0;color:#111">(5)</div>
<div class="t" style="right:44.5px;top:482.0px;font-size:17.5px;transform:scaleX(1.1);transform-origin:100% 0;color:#111">(5)</div>
<div class="t" style="left:45.0px;top:505.0px;font-size:17.5px;transform:scaleX(1.045);transform-origin:0 0;color:#111;font-style:italic">% of Revenue</div>
<div class="t" style="right:2199.5px;top:505.0px;font-size:17.5px;transform:scaleX(1.1);transform-origin:100% 0;color:#111;font-style:italic">(78%)</div>
<div class="t" style="right:2079.5px;top:505.0px;font-size:17.5px;transform:scaleX(1.1);transform-origin:100% 0;color:#111;font-style:italic">(26%)</div>
<div class="t" style="right:1959.5px;top:505.0px;font-size:17.5px;transform:scaleX(1.1);transform-origin:100% 0;color:#111;font-style:italic">(14%)</div>
<div class="t" style="right:1839.5px;top:505.0px;font-size:17.5px;transform:scaleX(1.1);transform-origin:100% 0;color:#111;font-style:italic">(6%)</div>
<div class="t" style="right:1719.5px;top:505.0px;font-size:17.5px;transform:scaleX(1.1);transform-origin:100% 0;color:#111;font-style:italic">(4%)</div>
<div class="t" style="right:1551.5px;top:505.0px;font-size:17.5px;transform:scaleX(1.1);transform-origin:100% 0;color:#111;font-style:italic">(461%)</div>
<div class="t" style="right:1414.5px;top:505.0px;font-size:17.5px;transform:scaleX(1.1);transform-origin:100% 0;color:#111;font-style:italic">(207%)</div>
<div class="t" style="right:1277.5px;top:505.0px;font-size:17.5px;transform:scaleX(1.1);transform-origin:100% 0;color:#111;font-style:italic">(125%)</div>
<div class="t" style="right:1140.5px;top:505.0px;font-size:17.5px;transform:scaleX(1.1);transform-origin:100% 0;color:#111;font-style:italic">(105%)</div>
<div class="t" style="right:1003.5px;top:505.0px;font-size:17.5px;transform:scaleX(1.1);transform-origin:100% 0;color:#111;font-style:italic">(91%)</div>
<div class="t" style="right:866.5px;top:505.0px;font-size:17.5px;transform:scaleX(1.1);transform-origin:100% 0;color:#111;font-style:italic">(80%)</div>
<div class="t" style="right:729.5px;top:505.0px;font-size:17.5px;transform:scaleX(1.1);transform-origin:100% 0;color:#111;font-style:italic">(71%)</div>
<div class="t" style="right:592.5px;top:505.0px;font-size:17.5px;transform:scaleX(1.1);transform-origin:100% 0;color:#111;font-style:italic">(64%)</div>
<div class="t" style="right:455.5px;top:505.0px;font-size:17.5px;transform:scaleX(1.1);transform-origin:100% 0;color:#111;font-style:italic">(59%)</div>
<div class="t" style="right:318.5px;top:505.0px;font-size:17.5px;transform:scaleX(1.1);transform-origin:100% 0;color:#111;font-style:italic">(54%)</div>
<div class="t" style="right:181.5px;top:505.0px;font-size:17.5px;transform:scaleX(1.1);transform-origin:100% 0;color:#111;font-style:italic">(50%)</div>
<div class="t" style="right:44.5px;top:505.0px;font-size:17.5px;transform:scaleX(1.1);transform-origin:100% 0;color:#111;font-style:italic">(46%)</div>
<div class="a" style="left:23px;top:528px;width:1075px;height:26px;background:#4ab0e6"></div>
<div class="a" style="left:1128px;top:528px;width:1645px;height:26px;background:#4ab0e6"></div>
<div class="t" style="left:38.5px;top:531.7px;font-size:21px;transform:scaleX(1.045);transform-origin:0 0;font-weight:bold;color:#fff">EBITDA</div>
<div class="t" style="right:2199.5px;top:533.1px;font-size:17px;transform:scaleX(1.18);transform-origin:100% 0;font-weight:bold;color:#fff">(126)</div>
<div class="t" style="right:2079.5px;top:533.1px;font-size:17px;transform:scaleX(1.18);transform-origin:100% 0;font-weight:bold;color:#fff">(22)</div>
<div class="t" style="right:1965.5px;top:533.1px;font-size:17px;transform:scaleX(1.18);transform-origin:100% 0;font-weight:bold;color:#fff">120</div>
<div class="t" style="right:1845.5px;top:533.1px;font-size:17px;transform:scaleX(1.18);transform-origin:100% 0;font-weight:bold;color:#fff">669</div>
<div class="t" style="right:1725.5px;top:533.1px;font-size:17px;transform:scaleX(1.18);transform-origin:100% 0;font-weight:bold;color:#fff">1,171</div>
<div class="t" style="right:1551.5px;top:533.1px;font-size:17px;transform:scaleX(1.18);transform-origin:100% 0;font-weight:bold;color:#fff">(15)</div>
<div class="t" style="right:1414.5px;top:533.1px;font-size:17px;transform:scaleX(1.18);transform-origin:100% 0;font-weight:bold;color:#fff">(14)</div>
<div class="t" style="right:1277.5px;top:533.1px;font-size:17px;transform:scaleX(1.18);transform-origin:100% 0;font-weight:bold;color:#fff">(13)</div>
<div class="t" style="right:1140.5px;top:533.1px;font-size:17px;transform:scaleX(1.18);transform-origin:100% 0;font-weight:bold;color:#fff">(12)</div>
<div class="t" style="right:1003.5px;top:533.1px;font-size:17px;transform:scaleX(1.18);transform-origin:100% 0;font-weight:bold;color:#fff">(11)</div>
<div class="t" style="right:866.5px;top:533.1px;font-size:17px;transform:scaleX(1.18);transform-origin:100% 0;font-weight:bold;color:#fff">(11)</div>
<div class="t" style="right:729.5px;top:533.1px;font-size:17px;transform:scaleX(1.18);transform-origin:100% 0;font-weight:bold;color:#fff">(10)</div>
<div class="t" style="right:592.5px;top:533.1px;font-size:17px;transform:scaleX(1.18);transform-origin:100% 0;font-weight:bold;color:#fff">(9)</div>
<div class="t" style="right:455.5px;top:533.1px;font-size:17px;transform:scaleX(1.18);transform-origin:100% 0;font-weight:bold;color:#fff">(9)</div>
<div class="t" style="right:318.5px;top:533.1px;font-size:17px;transform:scaleX(1.18);transform-origin:100% 0;font-weight:bold;color:#fff">(8)</div>
<div class="t" style="right:181.5px;top:533.1px;font-size:17px;transform:scaleX(1.18);transform-origin:100% 0;font-weight:bold;color:#fff">(7)</div>
<div class="t" style="right:44.5px;top:533.1px;font-size:17px;transform:scaleX(1.18);transform-origin:100% 0;font-weight:bold;color:#fff">(7)</div>
<div class="t" style="left:27.0px;top:559.0px;font-size:17.5px;color:#111;font-style:italic">EBITDA %</div>
<div class="t" style="right:2199.5px;top:559.0px;font-size:17.5px;transform:scaleX(1.1);transform-origin:100% 0;color:#111;font-style:italic">(157%)</div>
<div class="t" style="right:2079.5px;top:559.0px;font-size:17.5px;transform:scaleX(1.1);transform-origin:100% 0;color:#111;font-style:italic">(9%)</div>
<div class="t" style="right:1965.5px;top:559.0px;font-size:17.5px;transform:scaleX(1.1);transform-origin:100% 0;color:#111;font-style:italic">27%</div>
<div class="t" style="right:1845.5px;top:559.0px;font-size:17.5px;transform:scaleX(1.1);transform-origin:100% 0;color:#111;font-style:italic">60%</div>
<div class="t" style="right:1725.5px;top:559.0px;font-size:17.5px;transform:scaleX(1.1);transform-origin:100% 0;color:#111;font-style:italic">69%</div>
<div class="t" style="right:1551.5px;top:559.0px;font-size:17.5px;transform:scaleX(1.1);transform-origin:100% 0;color:#111;font-style:italic">(1,340%)</div>
<div class="t" style="right:1414.5px;top:559.0px;font-size:17.5px;transform:scaleX(1.1);transform-origin:100% 0;color:#111;font-style:italic">(555%)</div>
<div class="t" style="right:1277.5px;top:559.0px;font-size:17.5px;transform:scaleX(1.1);transform-origin:100% 0;color:#111;font-style:italic">(303%)</div>
<div class="t" style="right:1140.5px;top:559.0px;font-size:17.5px;transform:scaleX(1.1);transform-origin:100% 0;color:#111;font-style:italic">(242%)</div>
<div class="t" style="right:1003.5px;top:559.0px;font-size:17.5px;transform:scaleX(1.1);transform-origin:100% 0;color:#111;font-style:italic">(198%)</div>
<div class="t" style="right:866.5px;top:559.0px;font-size:17.5px;transform:scaleX(1.1);transform-origin:100% 0;color:#111;font-style:italic">(164%)</div>
<div class="t" style="right:729.5px;top:559.0px;font-size:17.5px;transform:scaleX(1.1);transform-origin:100% 0;color:#111;font-style:italic">(138%)</div>
<div class="t" style="right:592.5px;top:559.0px;font-size:17.5px;transform:scaleX(1.1);transform-origin:100% 0;color:#111;font-style:italic">(116%)</div>
<div class="t" style="right:455.5px;top:559.0px;font-size:17.5px;transform:scaleX(1.1);transform-origin:100% 0;color:#111;font-style:italic">(99%)</div>
<div class="t" style="right:318.5px;top:559.0px;font-size:17.5px;transform:scaleX(1.1);transform-origin:100% 0;color:#111;font-style:italic">(84%)</div>
<div class="t" style="right:181.5px;top:559.0px;font-size:17.5px;transform:scaleX(1.1);transform-origin:100% 0;color:#111;font-style:italic">(72%)</div>
<div class="t" style="right:44.5px;top:559.0px;font-size:17.5px;transform:scaleX(1.1);transform-origin:100% 0;color:#111;font-style:italic">(61%)</div>
<div class="t" style="left:27.0px;top:582.0px;font-size:17.5px;color:#111">Depreciation &amp; Amortization</div>
<div class="t" style="right:2199.5px;top:582.0px;font-size:17.5px;transform:scaleX(1.1);transform-origin:100% 0;color:#111">(8)</div>
<div class="t" style="right:2079.5px;top:582.0px;font-size:17.5px;transform:scaleX(1.1);transform-origin:100% 0;color:#111">(9)</div>
<div class="t" style="right:1959.5px;top:582.0px;font-size:17.5px;transform:scaleX(1.1);transform-origin:100% 0;color:#111">(9)</div>
<div class="t" style="right:1839.5px;top:582.0px;font-size:17.5px;transform:scaleX(1.1);transform-origin:100% 0;color:#111">(9)</div>
<div class="t" style="right:1719.5px;top:582.0px;font-size:17.5px;transform:scaleX(1.1);transform-origin:100% 0;color:#111">(9)</div>
<div class="t" style="right:1551.5px;top:582.0px;font-size:17.5px;transform:scaleX(1.1);transform-origin:100% 0;color:#111">(0)</div>
<div class="t" style="right:1414.5px;top:582.0px;font-size:17.5px;transform:scaleX(1.1);transform-origin:100% 0;color:#111">(1)</div>
<div class="t" style="right:1277.5px;top:582.0px;font-size:17.5px;transform:scaleX(1.1);transform-origin:100% 0;color:#111">(1)</div>
<div class="t" style="right:1140.5px;top:582.0px;font-size:17.5px;transform:scaleX(1.1);transform-origin:100% 0;color:#111">(1)</div>
<div class="t" style="right:1003.5px;top:582.0px;font-size:17.5px;transform:scaleX(1.1);transform-origin:100% 0;color:#111">(1)</div>
<div class="t" style="right:866.5px;top:582.0px;font-size:17.5px;transform:scaleX(1.1);transform-origin:100% 0;color:#111">(1)</div>
<div class="t" style="right:729.5px;top:582.0px;font-size:17.5px;transform:scaleX(1.1);transform-origin:100% 0;color:#111">(1)</div>
<div class="t" style="right:592.5px;top:582.0px;font-size:17.5px;transform:scaleX(1.1);transform-origin:100% 0;color:#111">(1)</div>
<div class="t" style="right:455.5px;top:582.0px;font-size:17.5px;transform:scaleX(1.1);transform-origin:100% 0;color:#111">(1)</div>
<div class="t" style="right:318.5px;top:582.0px;font-size:17.5px;transform:scaleX(1.1);transform-origin:100% 0;color:#111">(1)</div>
<div class="t" style="right:181.5px;top:582.0px;font-size:17.5px;transform:scaleX(1.1);transform-origin:100% 0;color:#111">(1)</div>
<div class="t" style="right:44.5px;top:582.0px;font-size:17.5px;transform:scaleX(1.1);transform-origin:100% 0;color:#111">(1)</div>
<div class="t" style="left:27.0px;top:605.0px;font-size:17.5px;color:#111">EBIT</div>
<div class="t" style="right:2199.5px;top:605.0px;font-size:17.5px;transform:scaleX(1.1);transform-origin:100% 0;color:#111">(134)</div>
<div class="t" style="right:2079.5px;top:605.0px;font-size:17.5px;transform:scaleX(1.1);transform-origin:100% 0;color:#111">(31)</div>
<div class="t" style="right:1965.5px;top:605.0px;font-size:17.5px;transform:scaleX(1.1);transform-origin:100% 0;color:#111">111</div>
<div class="t" style="right:1845.5px;top:605.0px;font-size:17.5px;transform:scaleX(1.1);transform-origin:100% 0;color:#111">660</div>
<div class="t" style="right:1725.5px;top:605.0px;font-size:17.5px;transform:scaleX(1.1);transform-origin:100% 0;color:#111">1,162</div>
<div class="t" style="right:1551.5px;top:605.0px;font-size:17.5px;transform:scaleX(1.1);transform-origin:100% 0;color:#111">(15)</div>
<div class="t" style="right:1414.5px;top:605.0px;font-size:17.5px;transform:scaleX(1.1);transform-origin:100% 0;color:#111">(14)</div>
<div class="t" style="right:1277.5px;top:605.0px;font-size:17.5px;transform:scaleX(1.1);transform-origin:100% 0;color:#111">(13)</div>
<div class="t" style="right:1140.5px;top:605.0px;font-size:17.5px;transform:scaleX(1.1);transform-origin:100% 0;color:#111">(13)</div>
<div class="t" style="right:1003.5px;top:605.0px;font-size:17.5px;transform:scaleX(1.1);transform-origin:100% 0;color:#111">(12)</div>
<div class="t" style="right:866.5px;top:605.0px;font-size:17.5px;transform:scaleX(1.1);transform-origin:100% 0;color:#111">(11)</div>
<div class="t" style="right:729.5px;top:605.0px;font-size:17.5px;transform:scaleX(1.1);transform-origin:100% 0;color:#111">(11)</div>
<div class="t" style="right:592.5px;top:605.0px;font-size:17.5px;transform:scaleX(1.1);transform-origin:100% 0;color:#111">(10)</div>
<div class="t" style="right:455.5px;top:605.0px;font-size:17.5px;transform:scaleX(1.1);transform-origin:100% 0;color:#111">(9)</div>
<div class="t" style="right:318.5px;top:605.0px;font-size:17.5px;transform:scaleX(1.1);transform-origin:100% 0;color:#111">(9)</div>
<div class="t" style="right:181.5px;top:605.0px;font-size:17.5px;transform:scaleX(1.1);transform-origin:100% 0;color:#111">(8)</div>
<div class="t" style="right:44.5px;top:605.0px;font-size:17.5px;transform:scaleX(1.1);transform-origin:100% 0;color:#111">(8)</div>
<div class="t" style="left:27.0px;top:628.0px;font-size:17.5px;color:#111">Net Interest Expense</div>
<div class="t" style="right:2199.5px;top:628.0px;font-size:17.5px;transform:scaleX(1.1);transform-origin:100% 0;color:#111">(18)</div>
<div class="t" style="right:2079.5px;top:628.0px;font-size:17.5px;transform:scaleX(1.1);transform-origin:100% 0;color:#111">(17)</div>
<div class="t" style="right:1959.5px;top:628.0px;font-size:17.5px;transform:scaleX(1.1);transform-origin:100% 0;color:#111">(14)</div>
<div class="t" style="right:1839.5px;top:628.0px;font-size:17.5px;transform:scaleX(1.1);transform-origin:100% 0;color:#111">(11)</div>
<div class="t" style="right:1719.5px;top:628.0px;font-size:17.5px;transform:scaleX(1.1);transform-origin:100% 0;color:#111">(7)</div>
<div class="t" style="right:1551.5px;top:628.0px;font-size:17.5px;transform:scaleX(1.1);transform-origin:100% 0;color:#111">(1)</div>
<div class="t" style="right:1414.5px;top:628.0px;font-size:17.5px;transform:scaleX(1.1);transform-origin:100% 0;color:#111">(1)</div>
<div class="t" style="right:1277.5px;top:628.0px;font-size:17.5px;transform:scaleX(1.1);transform-origin:100% 0;color:#111">(2)</div>
<div class="t" style="right:1140.5px;top:628.0px;font-size:17.5px;transform:scaleX(1.1);transform-origin:100% 0;color:#111">(2)</div>
<div class="t" style="right:1003.5px;top:628.0px;font-size:17.5px;transform:scaleX(1.1);transform-origin:100% 0;color:#111">(2)</div>
<div class="t" style="right:866.5px;top:628.0px;font-size:17.5px;transform:scaleX(1.1);transform-origin:100% 0;color:#111">(2)</div>
<div class="t" style="right:729.5px;top:628.0px;font-size:17.5px;transform:scaleX(1.1);transform-origin:100% 0;color:#111">(2)</div>
<div class="t" style="right:592.5px;top:628.0px;font-size:17.5px;transform:scaleX(1.1);transform-origin:100% 0;color:#111">(2)</div>
<div class="t" style="right:455.5px;top:628.0px;font-size:17.5px;transform:scaleX(1.1);transform-origin:100% 0;color:#111">(2)</div>
<div class="t" style="right:318.5px;top:628.0px;font-size:17.5px;transform:scaleX(1.1);transform-origin:100% 0;color:#111">(2)</div>
<div class="t" style="right:181.5px;top:628.0px;font-size:17.5px;transform:scaleX(1.1);transform-origin:100% 0;color:#111">(2)</div>
<div class="t" style="right:44.5px;top:628.0px;font-size:17.5px;transform:scaleX(1.1);transform-origin:100% 0;color:#111">(2)</div>
<div class="t" style="left:27.0px;top:651.0px;font-size:17.5px;color:#111">Net Profit Before Tax</div>
<div class="t" style="right:2199.5px;top:651.0px;font-size:17.5px;transform:scaleX(1.1);transform-origin:100% 0;color:#111">(152)</div>
<div class="t" style="right:2079.5px;top:651.0px;font-size:17.5px;transform:scaleX(1.1);transform-origin:100% 0;color:#111">(48)</div>
<div class="t" style="right:1965.5px;top:651.0px;font-size:17.5px;transform:scaleX(1.1);transform-origin:100% 0;color:#111">97</div>
<div class="t" style="right:1845.5px;top:651.0px;font-size:17.5px;transform:scaleX(1.1);transform-origin:100% 0;color:#111">649</div>
<div class="t" style="right:1725.5px;top:651.0px;font-size:17.5px;transform:scaleX(1.1);transform-origin:100% 0;color:#111">1,155</div>
<div class="t" style="right:1551.5px;top:651.0px;font-size:17.5px;transform:scaleX(1.1);transform-origin:100% 0;color:#111">(16)</div>
<div class="t" style="right:1414.5px;top:651.0px;font-size:17.5px;transform:scaleX(1.1);transform-origin:100% 0;color:#111">(15)</div>
<div class="t" style="right:1277.5px;top:651.0px;font-size:17.5px;transform:scaleX(1.1);transform-origin:100% 0;color:#111">(15)</div>
<div class="t" style="right:1140.5px;top:651.0px;font-size:17.5px;transform:scaleX(1.1);transform-origin:100% 0;color:#111">(14)</div>
<div class="t" style="right:1003.5px;top:651.0px;font-size:17.5px;transform:scaleX(1.1);transform-origin:100% 0;color:#111">(14)</div>
<div class="t" style="right:866.5px;top:651.0px;font-size:17.5px;transform:scaleX(1.1);transform-origin:100% 0;color:#111">(13)</div>
<div class="t" style="right:729.5px;top:651.0px;font-size:17.5px;transform:scaleX(1.1);transform-origin:100% 0;color:#111">(12)</div>
<div class="t" style="right:592.5px;top:651.0px;font-size:17.5px;transform:scaleX(1.1);transform-origin:100% 0;color:#111">(12)</div>
<div class="t" style="right:455.5px;top:651.0px;font-size:17.5px;transform:scaleX(1.1);transform-origin:100% 0;color:#111">(11)</div>
<div class="t" style="right:318.5px;top:651.0px;font-size:17.5px;transform:scaleX(1.1);transform-origin:100% 0;color:#111">(10)</div>
<div class="t" style="right:181.5px;top:651.0px;font-size:17.5px;transform:scaleX(1.1);transform-origin:100% 0;color:#111">(10)</div>
<div class="t" style="right:44.5px;top:651.0px;font-size:17.5px;transform:scaleX(1.1);transform-origin:100% 0;color:#111">(9)</div>
<div class="t" style="left:27.0px;top:674.0px;font-size:17.5px;color:#111">Tax Expense</div>
<div class="t" style="right:2209.0px;top:674.0px;font-size:17.5px;transform:scaleX(1.1);transform-origin:100% 0;color:#111">-</div>
<div class="t" style="right:2089.0px;top:674.0px;font-size:17.5px;transform:scaleX(1.1);transform-origin:100% 0;color:#111">-</div>
<div class="t" style="right:1959.5px;top:674.0px;font-size:17.5px;transform:scaleX(1.1);transform-origin:100% 0;color:#111">(24)</div>
<div class="t" style="right:1839.5px;top:674.0px;font-size:17.5px;transform:scaleX(1.1);transform-origin:100% 0;color:#111">(162)</div>
<div class="t" style="right:1719.5px;top:674.0px;font-size:17.5px;transform:scaleX(1.1);transform-origin:100% 0;color:#111">(289)</div>
<div class="t" style="right:1561.0px;top:674.0px;font-size:17.5px;transform:scaleX(1.1);transform-origin:100% 0;color:#111">-</div>
<div class="t" style="right:1424.0px;top:674.0px;font-size:17.5px;transform:scaleX(1.1);transform-origin:100% 0;color:#111">-</div>
<div class="t" style="right:1287.0px;top:674.0px;font-size:17.5px;transform:scaleX(1.1);transform-origin:100% 0;color:#111">-</div>
<div class="t" style="right:1150.0px;top:674.0px;font-size:17.5px;transform:scaleX(1.1);transform-origin:100% 0;color:#111">-</div>
<div class="t" style="right:1013.0px;top:674.0px;font-size:17.5px;transform:scaleX(1.1);transform-origin:100% 0;color:#111">-</div>
<div class="t" style="right:876.0px;top:674.0px;font-size:17.5px;transform:scaleX(1.1);transform-origin:100% 0;color:#111">-</div>
<div class="t" style="right:739.0px;top:674.0px;font-size:17.5px;transform:scaleX(1.1);transform-origin:100% 0;color:#111">-</div>
<div class="t" style="right:602.0px;top:674.0px;font-size:17.5px;transform:scaleX(1.1);transform-origin:100% 0;color:#111">-</div>
<div class="t" style="right:465.0px;top:674.0px;font-size:17.5px;transform:scaleX(1.1);transform-origin:100% 0;color:#111">-</div>
<div class="t" style="right:328.0px;top:674.0px;font-size:17.5px;transform:scaleX(1.1);transform-origin:100% 0;color:#111">-</div>
<div class="t" style="right:191.0px;top:674.0px;font-size:17.5px;transform:scaleX(1.1);transform-origin:100% 0;color:#111">-</div>
<div class="t" style="right:54.0px;top:674.0px;font-size:17.5px;transform:scaleX(1.1);transform-origin:100% 0;color:#111">-</div>
<div class="a" style="left:23px;top:692px;width:1075px;height:26px;background:#4ab0e6"></div>
<div class="a" style="left:1128px;top:692px;width:1645px;height:26px;background:#4ab0e6"></div>
<div class="t" style="left:38.5px;top:695.7px;font-size:21px;transform:scaleX(1.045);transform-origin:0 0;font-weight:bold;color:#fff">Net Profit After Tax</div>
<div class="t" style="right:2199.5px;top:697.1px;font-size:17px;transform:scaleX(1.18);transform-origin:100% 0;font-weight:bold;color:#fff">(152)</div>
<div class="t" style="right:2079.5px;top:697.1px;font-size:17px;transform:scaleX(1.18);transform-origin:100% 0;font-weight:bold;color:#fff">(48)</div>
<div class="t" style="right:1965.5px;top:697.1px;font-size:17px;transform:scaleX(1.18);transform-origin:100% 0;font-weight:bold;color:#fff">73</div>
<div class="t" style="right:1845.5px;top:697.1px;font-size:17px;transform:scaleX(1.18);transform-origin:100% 0;font-weight:bold;color:#fff">487</div>
<div class="t" style="right:1725.5px;top:697.1px;font-size:17px;transform:scaleX(1.18);transform-origin:100% 0;font-weight:bold;color:#fff">866</div>
<div class="t" style="right:1551.5px;top:697.1px;font-size:17px;transform:scaleX(1.18);transform-origin:100% 0;font-weight:bold;color:#fff">(16)</div>
<div class="t" style="right:1414.5px;top:697.1px;font-size:17px;transform:scaleX(1.18);transform-origin:100% 0;font-weight:bold;color:#fff">(15)</div>
<div class="t" style="right:1277.5px;top:697.1px;font-size:17px;transform:scaleX(1.18);transform-origin:100% 0;font-weight:bold;color:#fff">(15)</div>
<div class="t" style="right:1140.5px;top:697.1px;font-size:17px;transform:scaleX(1.18);transform-origin:100% 0;font-weight:bold;color:#fff">(14)</div>
<div class="t" style="right:1003.5px;top:697.1px;font-size:17px;transform:scaleX(1.18);transform-origin:100% 0;font-weight:bold;color:#fff">(14)</div>
<div class="t" style="right:866.5px;top:697.1px;font-size:17px;transform:scaleX(1.18);transform-origin:100% 0;font-weight:bold;color:#fff">(13)</div>
<div class="t" style="right:729.5px;top:697.1px;font-size:17px;transform:scaleX(1.18);transform-origin:100% 0;font-weight:bold;color:#fff">(12)</div>
<div class="t" style="right:592.5px;top:697.1px;font-size:17px;transform:scaleX(1.18);transform-origin:100% 0;font-weight:bold;color:#fff">(12)</div>
<div class="t" style="right:455.5px;top:697.1px;font-size:17px;transform:scaleX(1.18);transform-origin:100% 0;font-weight:bold;color:#fff">(11)</div>
<div class="t" style="right:318.5px;top:697.1px;font-size:17px;transform:scaleX(1.18);transform-origin:100% 0;font-weight:bold;color:#fff">(10)</div>
<div class="t" style="right:181.5px;top:697.1px;font-size:17px;transform:scaleX(1.18);transform-origin:100% 0;font-weight:bold;color:#fff">(10)</div>
<div class="t" style="right:44.5px;top:697.1px;font-size:17px;transform:scaleX(1.18);transform-origin:100% 0;font-weight:bold;color:#fff">(9)</div>
<div class="t" style="left:45.0px;top:723.0px;font-size:17.5px;transform:scaleX(1.045);transform-origin:0 0;color:#111;font-style:italic">Net Profit After Tax %</div>
<div class="t" style="right:2199.5px;top:723.0px;font-size:17.5px;transform:scaleX(1.1);transform-origin:100% 0;color:#111;font-style:italic">(189%)</div>
<div class="t" style="right:2079.5px;top:723.0px;font-size:17.5px;transform:scaleX(1.1);transform-origin:100% 0;color:#111;font-style:italic">(20%)</div>
<div class="t" style="right:1965.5px;top:723.0px;font-size:17.5px;transform:scaleX(1.1);transform-origin:100% 0;color:#111;font-style:italic">16%</div>
<div class="t" style="right:1845.5px;top:723.0px;font-size:17.5px;transform:scaleX(1.1);transform-origin:100% 0;color:#111;font-style:italic">44%</div>
<div class="t" style="right:1725.5px;top:723.0px;font-size:17.5px;transform:scaleX(1.1);transform-origin:100% 0;color:#111;font-style:italic">51%</div>
<div class="t" style="right:1551.5px;top:723.0px;font-size:17.5px;transform:scaleX(1.1);transform-origin:100% 0;color:#111;font-style:italic">(1,452%)</div>
<div class="t" style="right:1414.5px;top:723.0px;font-size:17.5px;transform:scaleX(1.1);transform-origin:100% 0;color:#111;font-style:italic">(615%)</div>
<div class="t" style="right:1277.5px;top:723.0px;font-size:17.5px;transform:scaleX(1.1);transform-origin:100% 0;color:#111;font-style:italic">(360%)</div>
<div class="t" style="right:1140.5px;top:723.0px;font-size:17.5px;transform:scaleX(1.1);transform-origin:100% 0;color:#111;font-style:italic">(290%)</div>
<div class="t" style="right:1003.5px;top:723.0px;font-size:17.5px;transform:scaleX(1.1);transform-origin:100% 0;color:#111;font-style:italic">(239%)</div>
<div class="t" style="right:866.5px;top:723.0px;font-size:17.5px;transform:scaleX(1.1);transform-origin:100% 0;color:#111;font-style:italic">(200%)</div>
<div class="t" style="right:729.5px;top:723.0px;font-size:17.5px;transform:scaleX(1.1);transform-origin:100% 0;color:#111;font-style:italic">(170%)</div>
<div class="t" style="right:592.5px;top:723.0px;font-size:17.5px;transform:scaleX(1.1);transform-origin:100% 0;color:#111;font-style:italic">(145%)</div>
<div class="t" style="right:455.5px;top:723.0px;font-size:17.5px;transform:scaleX(1.1);transform-origin:100% 0;color:#111;font-style:italic">(125%)</div>
<div class="t" style="right:318.5px;top:723.0px;font-size:17.5px;transform:scaleX(1.1);transform-origin:100% 0;color:#111;font-style:italic">(108%)</div>
<div class="t" style="right:181.5px;top:723.0px;font-size:17.5px;transform:scaleX(1.1);transform-origin:100% 0;color:#111;font-style:italic">(94%)</div>
<div class="t" style="right:44.5px;top:723.0px;font-size:17.5px;transform:scaleX(1.1);transform-origin:100% 0;color:#111;font-style:italic">(81%)</div>
<div class="a" style="left:23px;top:765px;width:1075px;height:35px;background:#4b50d3"></div>
<div class="t" style="left:23.0px;top:769.2px;width:1075px;text-align:center;font-size:27.5px;transform:scaleX(1.123);transform-origin:50% 0;font-weight:bold;color:#fff">Income Statement ($'000) - 5 years to December 2030</div>
<div class="a" style="left:1128px;top:765px;width:1645px;height:35px;background:#4b50d3"></div>
<div class="t" style="left:1128.0px;top:769.2px;width:1645px;text-align:center;font-size:27.5px;transform:scaleX(1.152);transform-origin:50% 0;font-weight:bold;color:#fff">Income Statement ($'000) - 2026</div>
<div class="a" style="left:23px;top:1261px;width:1075px;height:35px;background:#4b50d3"></div>
<div class="t" style="left:23.0px;top:1265.2px;width:1075px;text-align:center;font-size:27.5px;transform:scaleX(1.106);transform-origin:50% 0;font-weight:bold;color:#fff">Balance Sheet ($'000) - 5 years to December 2030</div>
<div class="a" style="left:1128px;top:1261px;width:1645px;height:35px;background:#4b50d3"></div>
<div class="t" style="left:1128.0px;top:1265.2px;width:1645px;text-align:center;font-size:27.5px;transform:scaleX(1.13);transform-origin:50% 0;font-weight:bold;color:#fff">Balance Sheet ($'000) - 2026</div>
<div class="a" style="left:24px;top:1302px;width:473px;height:23px;background:#6c71e6"></div>
<div class="t" style="left:35.0px;top:1304.8px;font-size:18.5px;transform:scaleX(1.035);transform-origin:0 0;font-weight:bold;color:#fff">Year Ending</div>
<div class="a" style="left:497px;top:1302px;width:120px;height:23px;background:#6c71e6"></div>
<div class="t" style="left:497.0px;top:1304.8px;width:120px;text-align:center;font-size:18.5px;transform:scaleX(1.06);transform-origin:50% 0;font-weight:bold;color:#fff">2026</div>
<div class="a" style="left:617px;top:1302px;width:120px;height:23px;background:#6c71e6"></div>
<div class="t" style="left:617.0px;top:1304.8px;width:120px;text-align:center;font-size:18.5px;transform:scaleX(1.06);transform-origin:50% 0;font-weight:bold;color:#fff">2027</div>
<div class="a" style="left:737px;top:1302px;width:120px;height:23px;background:#6c71e6"></div>
<div class="t" style="left:737.0px;top:1304.8px;width:120px;text-align:center;font-size:18.5px;transform:scaleX(1.06);transform-origin:50% 0;font-weight:bold;color:#fff">2028</div>
<div class="a" style="left:857px;top:1302px;width:120px;height:23px;background:#6c71e6"></div>
<div class="t" style="left:857.0px;top:1304.8px;width:120px;text-align:center;font-size:18.5px;transform:scaleX(1.06);transform-origin:50% 0;font-weight:bold;color:#fff">2029</div>
<div class="a" style="left:977px;top:1302px;width:120px;height:23px;background:#6c71e6"></div>
<div class="t" style="left:977.0px;top:1304.8px;width:120px;text-align:center;font-size:18.5px;transform:scaleX(1.06);transform-origin:50% 0;font-weight:bold;color:#fff">2030</div>
<div class="a" style="left:497px;top:1302px;width:1px;height:23px;background:#fff"></div>
<div class="a" style="left:617px;top:1302px;width:1px;height:23px;background:#fff"></div>
<div class="a" style="left:737px;top:1302px;width:1px;height:23px;background:#fff"></div>
<div class="a" style="left:857px;top:1302px;width:1px;height:23px;background:#fff"></div>
<div class="a" style="left:977px;top:1302px;width:1px;height:23px;background:#fff"></div>
<div class="a" style="left:1129px;top:1302px;width:136px;height:23px;background:#6c71e6"></div>
<div class="t" style="left:1129.0px;top:1304.8px;width:136px;text-align:center;font-size:18.5px;transform:scaleX(0.975);transform-origin:50% 0;font-weight:bold;color:#fff">Jan</div>
<div class="a" style="left:1265px;top:1302px;width:137px;height:23px;background:#6c71e6"></div>
<div class="t" style="left:1265.0px;top:1304.8px;width:137px;text-align:center;font-size:18.5px;transform:scaleX(0.975);transform-origin:50% 0;font-weight:bold;color:#fff">Feb</div>
<div class="a" style="left:1402px;top:1302px;width:137px;height:23px;background:#6c71e6"></div>
<div class="t" style="left:1402.0px;top:1304.8px;width:137px;text-align:center;font-size:18.5px;transform:scaleX(0.975);transform-origin:50% 0;font-weight:bold;color:#fff">Mar</div>
<div class="a" style="left:1539px;top:1302px;width:137px;height:23px;background:#6c71e6"></div>
<div class="t" style="left:1539.0px;top:1304.8px;width:137px;text-align:center;font-size:18.5px;transform:scaleX(0.975);transform-origin:50% 0;font-weight:bold;color:#fff">Apr</div>
<div class="a" style="left:1676px;top:1302px;width:137px;height:23px;background:#6c71e6"></div>
<div class="t" style="left:1676.0px;top:1304.8px;width:137px;text-align:center;font-size:18.5px;transform:scaleX(0.975);transform-origin:50% 0;font-weight:bold;color:#fff">May</div>
<div class="a" style="left:1813px;top:1302px;width:137px;height:23px;background:#6c71e6"></div>
<div class="t" style="left:1813.0px;top:1304.8px;width:137px;text-align:center;font-size:18.5px;transform:scaleX(0.975);transform-origin:50% 0;font-weight:bold;color:#fff">Jun</div>
<div class="a" style="left:1950px;top:1302px;width:137px;height:23px;background:#6c71e6"></div>
<div class="t" style="left:1950.0px;top:1304.8px;width:137px;text-align:center;font-size:18.5px;transform:scaleX(0.975);transform-origin:50% 0;font-weight:bold;color:#fff">Jul</div>
<div class="a" style="left:2087px;top:1302px;width:137px;height:23px;background:#6c71e6"></div>
<div class="t" style="left:2087.0px;top:1304.8px;width:137px;text-align:center;font-size:18.5px;transform:scaleX(0.975);transform-origin:50% 0;font-weight:bold;color:#fff">Aug</div>
<div class="a" style="left:2224px;top:1302px;width:137px;height:23px;background:#6c71e6"></div>
<div class="t" style="left:2224.0px;top:1304.8px;width:137px;text-align:center;font-size:18.5px;transform:scaleX(0.975);transform-origin:50% 0;font-weight:bold;color:#fff">Sep</div>
<div class="a" style="left:2361px;top:1302px;width:137px;height:23px;background:#6c71e6"></div>
<div class="t" style="left:2361.0px;top:1304.8px;width:137px;text-align:center;font-size:18.5px;transform:scaleX(0.975);transform-origin:50% 0;font-weight:bold;color:#fff">Oct</div>
<div class="a" style="left:2498px;top:1302px;width:137px;height:23px;background:#6c71e6"></div>
<div class="t" style="left:2498.0px;top:1304.8px;width:137px;text-align:center;font-size:18.5px;transform:scaleX(0.975);transform-origin:50% 0;font-weight:bold;color:#fff">Nov</div>
<div class="a" style="left:2635px;top:1302px;width:137px;height:23px;background:#6c71e6"></div>
<div class="t" style="left:2635.0px;top:1304.8px;width:137px;text-align:center;font-size:18.5px;transform:scaleX(0.975);transform-origin:50% 0;font-weight:bold;color:#fff">Dec</div>
<div class="a" style="left:1265px;top:1302px;width:1px;height:23px;background:#fff"></div>
<div class="a" style="left:1402px;top:1302px;width:1px;height:23px;background:#fff"></div>
<div class="a" style="left:1539px;top:1302px;width:1px;height:23px;background:#fff"></div>
<div class="a" style="left:1676px;top:1302px;width:1px;height:23px;background:#fff"></div>
<div class="a" style="left:1813px;top:1302px;width:1px;height:23px;background:#fff"></div>
<div class="a" style="left:1950px;top:1302px;width:1px;height:23px;background:#fff"></div>
<div class="a" style="left:2087px;top:1302px;width:1px;height:23px;background:#fff"></div>
<div class="a" style="left:2224px;top:1302px;width:1px;height:23px;background:#fff"></div>
<div class="a" style="left:2361px;top:1302px;width:1px;height:23px;background:#fff"></div>
<div class="a" style="left:2498px;top:1302px;width:1px;height:23px;background:#fff"></div>
<div class="a" style="left:2635px;top:1302px;width:1px;height:23px;background:#fff"></div>
<div class="t" style="left:27.0px;top:1334.0px;font-size:17.5px;color:#111">Current Assets</div>
<div class="t" style="right:2205.5px;top:1334.0px;font-size:17.5px;transform:scaleX(1.1);transform-origin:100% 0;color:#111">761</div>
<div class="t" style="right:2085.5px;top:1334.0px;font-size:17.5px;transform:scaleX(1.1);transform-origin:100% 0;color:#111">678</div>
<div class="t" style="right:1965.5px;top:1334.0px;font-size:17.5px;transform:scaleX(1.1);transform-origin:100% 0;color:#111">715</div>
<div class="t" style="right:1845.5px;top:1334.0px;font-size:17.5px;transform:scaleX(1.1);transform-origin:100% 0;color:#111">1,166</div>
<div class="t" style="right:1725.5px;top:1334.0px;font-size:17.5px;transform:scaleX(1.1);transform-origin:100% 0;color:#111">1,993</div>
<div class="t" style="right:1557.5px;top:1334.0px;font-size:17.5px;transform:scaleX(1.1);transform-origin:100% 0;color:#111">859</div>
<div class="t" style="right:1420.5px;top:1334.0px;font-size:17.5px;transform:scaleX(1.1);transform-origin:100% 0;color:#111">817</div>
<div class="t" style="right:1283.5px;top:1334.0px;font-size:17.5px;transform:scaleX(1.1);transform-origin:100% 0;color:#111">874</div>
<div class="t" style="right:1146.5px;top:1334.0px;font-size:17.5px;transform:scaleX(1.1);transform-origin:100% 0;color:#111">859</div>
<div class="t" style="right:1009.5px;top:1334.0px;font-size:17.5px;transform:scaleX(1.1);transform-origin:100% 0;color:#111">844</div>
<div class="t" style="right:872.5px;top:1334.0px;font-size:17.5px;transform:scaleX(1.1);transform-origin:100% 0;color:#111">831</div>
<div class="t" style="right:735.5px;top:1334.0px;font-size:17.5px;transform:scaleX(1.1);transform-origin:100% 0;color:#111">817</div>
<div class="t" style="right:598.5px;top:1334.0px;font-size:17.5px;transform:scaleX(1.1);transform-origin:100% 0;color:#111">805</div>
<div class="t" style="right:461.5px;top:1334.0px;font-size:17.5px;transform:scaleX(1.1);transform-origin:100% 0;color:#111">793</div>
<div class="t" style="right:324.5px;top:1334.0px;font-size:17.5px;transform:scaleX(1.1);transform-origin:100% 0;color:#111">781</div>
<div class="t" style="right:187.5px;top:1334.0px;font-size:17.5px;transform:scaleX(1.1);transform-origin:100% 0;color:#111">771</div>
<div class="t" style="right:50.5px;top:1334.0px;font-size:17.5px;transform:scaleX(1.1);transform-origin:100% 0;color:#111">761</div>
<div class="t" style="left:27.0px;top:1357.0px;font-size:17.5px;color:#111">Non-Current Assets</div>
<div class="t" style="right:2205.5px;top:1357.0px;font-size:17.5px;transform:scaleX(1.1);transform-origin:100% 0;color:#111">79</div>
<div class="t" style="right:2085.5px;top:1357.0px;font-size:17.5px;transform:scaleX(1.1);transform-origin:100% 0;color:#111">70</div>
<div class="t" style="right:1965.5px;top:1357.0px;font-size:17.5px;transform:scaleX(1.1);transform-origin:100% 0;color:#111">62</div>
<div class="t" style="right:1845.5px;top:1357.0px;font-size:17.5px;transform:scaleX(1.1);transform-origin:100% 0;color:#111">53</div>
<div class="t" style="right:1725.5px;top:1357.0px;font-size:17.5px;transform:scaleX(1.1);transform-origin:100% 0;color:#111">44</div>
<div class="t" style="right:1557.5px;top:1357.0px;font-size:17.5px;transform:scaleX(1.1);transform-origin:100% 0;color:#111">32</div>
<div class="t" style="right:1420.5px;top:1357.0px;font-size:17.5px;transform:scaleX(1.1);transform-origin:100% 0;color:#111">60</div>
<div class="t" style="right:1283.5px;top:1357.0px;font-size:17.5px;transform:scaleX(1.1);transform-origin:100% 0;color:#111">86</div>
<div class="t" style="right:1146.5px;top:1357.0px;font-size:17.5px;transform:scaleX(1.1);transform-origin:100% 0;color:#111">85</div>
<div class="t" style="right:1009.5px;top:1357.0px;font-size:17.5px;transform:scaleX(1.1);transform-origin:100% 0;color:#111">84</div>
<div class="t" style="right:872.5px;top:1357.0px;font-size:17.5px;transform:scaleX(1.1);transform-origin:100% 0;color:#111">83</div>
<div class="t" style="right:735.5px;top:1357.0px;font-size:17.5px;transform:scaleX(1.1);transform-origin:100% 0;color:#111">83</div>
<div class="t" style="right:598.5px;top:1357.0px;font-size:17.5px;transform:scaleX(1.1);transform-origin:100% 0;color:#111">82</div>
<div class="t" style="right:461.5px;top:1357.0px;font-size:17.5px;transform:scaleX(1.1);transform-origin:100% 0;color:#111">81</div>
<div class="t" style="right:324.5px;top:1357.0px;font-size:17.5px;transform:scaleX(1.1);transform-origin:100% 0;color:#111">80</div>
<div class="t" style="right:187.5px;top:1357.0px;font-size:17.5px;transform:scaleX(1.1);transform-origin:100% 0;color:#111">80</div>
<div class="t" style="right:50.5px;top:1357.0px;font-size:17.5px;transform:scaleX(1.1);transform-origin:100% 0;color:#111">79</div>
<svg style="left:12.799999999999997px;top:849.4000000000001px" width="993.5" height="356.79999999999995" viewBox="59.8 1149.4 993.5 356.79999999999995"><line x1="69.8" y1="1496.2" x2="1043.3" y2="1496.2" stroke="#6cb8de" stroke-width="1.4"/><line x1="69.8" y1="1428.8" x2="1043.3" y2="1428.8" stroke="#6cb8de" stroke-width="1.4"/><line x1="69.8" y1="1361.5" x2="1043.3" y2="1361.5" stroke="#6cb8de" stroke-width="1.4"/><line x1="69.8" y1="1294.1" x2="1043.3" y2="1294.1" stroke="#6cb8de" stroke-width="1.4"/><line x1="69.8" y1="1226.8" x2="1043.3" y2="1226.8" stroke="#6cb8de" stroke-width="1.4"/><line x1="69.8" y1="1159.4" x2="1043.3" y2="1159.4" stroke="#6cb8de" stroke-width="1.4"/><line x1="69.8" y1="1159.4" x2="69.8" y2="1496.2" stroke="#6cb8de" stroke-width="1.4"/><line x1="264.5" y1="1159.4" x2="264.5" y2="1496.2" stroke="#6cb8de" stroke-width="1.4"/><line x1="459.2" y1="1159.4" x2="459.2" y2="1496.2" stroke="#6cb8de" stroke-width="1.4"/><line x1="653.9" y1="1159.4" x2="653.9" y2="1496.2" stroke="#6cb8de" stroke-width="1.4"/><line x1="848.6" y1="1159.4" x2="848.6" y2="1496.2" stroke="#6cb8de" stroke-width="1.4"/><line x1="1043.3" y1="1159.4" x2="1043.3" y2="1496.2" stroke="#6cb8de" stroke-width="1.4"/><line x1="69.8" y1="1428.8" x2="1043.3" y2="1428.8" stroke="#44607a" stroke-width="1.4"/><polyline points="167.1,1418.1 361.8,1396.9 556.5,1368.2 751.2,1278.9 945.9,1200.6" fill="none" stroke="#ee7767" stroke-width="2.6" stroke-linejoin="round"/><circle cx="167.1" cy="1418.1" r="5.2" fill="#ee7767"/><circle cx="361.8" cy="1396.9" r="5.2" fill="#ee7767"/><circle cx="556.5" cy="1368.2" r="5.2" fill="#ee7767"/><circle cx="751.2" cy="1278.9" r="5.2" fill="#ee7767"/><circle cx="945.9" cy="1200.6" r="5.2" fill="#ee7767"/><polyline points="167.1,1445.8 361.8,1431.8 556.5,1412.7 751.2,1338.7 945.9,1271.1" fill="none" stroke="#5f9d3e" stroke-width="2.6" stroke-linejoin="round"/><circle cx="167.1" cy="1445.8" r="5.2" fill="#5f9d3e"/><circle cx="361.8" cy="1431.8" r="5.2" fill="#5f9d3e"/><circle cx="556.5" cy="1412.7" r="5.2" fill="#5f9d3e"/><circle cx="751.2" cy="1338.7" r="5.2" fill="#5f9d3e"/><circle cx="945.9" cy="1271.1" r="5.2" fill="#5f9d3e"/><polyline points="167.1,1449.3 361.8,1435.3 556.5,1419.0 751.2,1363.2 945.9,1312.2" fill="none" stroke="#4f52d0" stroke-width="2.6" stroke-linejoin="round"/><circle cx="167.1" cy="1449.3" r="5.2" fill="#4f52d0"/><circle cx="361.8" cy="1435.3" r="5.2" fill="#4f52d0"/><circle cx="556.5" cy="1419.0" r="5.2" fill="#4f52d0"/><circle cx="751.2" cy="1363.2" r="5.2" fill="#4f52d0"/><circle cx="945.9" cy="1312.2" r="5.2" fill="#4f52d0"/></svg>
<div class="t" style="left:1019.0px;top:851.2px;font-size:17px;transform:scaleX(1.18);transform-origin:0 0;font-weight:bold;color:#111">2,000</div>
<div class="t" style="left:1019.0px;top:918.6px;font-size:17px;transform:scaleX(1.18);transform-origin:0 0;font-weight:bold;color:#111">1,500</div>
<div class="t" style="left:1019.0px;top:985.9px;font-size:17px;transform:scaleX(1.18);transform-origin:0 0;font-weight:bold;color:#111">1,000</div>
<div class="t" style="left:1019.0px;top:1053.3px;font-size:17px;transform:scaleX(1.18);transform-origin:0 0;font-weight:bold;color:#111">500</div>
<div class="t" style="left:1019.0px;top:1120.6px;font-size:17px;transform:scaleX(1.18);transform-origin:0 0;font-weight:bold;color:#111">-</div>
<div class="t" style="left:1014.0px;top:1188.0px;font-size:17px;transform:scaleX(1.18);transform-origin:0 0;font-weight:bold;color:#111">(500)</div>
<div class="t" style="left:20.1px;top:1212.2px;width:200px;text-align:center;font-size:17.5px;transform:scaleX(1.2);transform-origin:50% 0;font-weight:bold;color:#111">2026</div>
<div class="t" style="left:214.8px;top:1212.2px;width:200px;text-align:center;font-size:17.5px;transform:scaleX(1.2);transform-origin:50% 0;font-weight:bold;color:#111">2027</div>
<div class="t" style="left:409.5px;top:1212.2px;width:200px;text-align:center;font-size:17.5px;transform:scaleX(1.2);transform-origin:50% 0;font-weight:bold;color:#111">2028</div>
<div class="t" style="left:604.2px;top:1212.2px;width:200px;text-align:center;font-size:17.5px;transform:scaleX(1.2);transform-origin:50% 0;font-weight:bold;color:#111">2029</div>
<div class="t" style="left:798.9px;top:1212.2px;width:200px;text-align:center;font-size:17.5px;transform:scaleX(1.2);transform-origin:50% 0;font-weight:bold;color:#111">2030</div>
<svg style="left:1118.2px;top:849.5px" width="1596.8" height="358.0" viewBox="1165.2 1149.5 1596.8 358.0"><line x1="1175.2" y1="1497.5" x2="2752" y2="1497.5" stroke="#6cb8de" stroke-width="1.4"/><line x1="1175.2" y1="1449.2" x2="2752" y2="1449.2" stroke="#6cb8de" stroke-width="1.4"/><line x1="1175.2" y1="1400.9" x2="2752" y2="1400.9" stroke="#6cb8de" stroke-width="1.4"/><line x1="1175.2" y1="1352.6" x2="2752" y2="1352.6" stroke="#6cb8de" stroke-width="1.4"/><line x1="1175.2" y1="1304.4" x2="2752" y2="1304.4" stroke="#6cb8de" stroke-width="1.4"/><line x1="1175.2" y1="1256.1" x2="2752" y2="1256.1" stroke="#6cb8de" stroke-width="1.4"/><line x1="1175.2" y1="1207.8" x2="2752" y2="1207.8" stroke="#6cb8de" stroke-width="1.4"/><line x1="1175.2" y1="1159.5" x2="2752" y2="1159.5" stroke="#6cb8de" stroke-width="1.4"/><rect x="1175.2" y="1159.5" width="1576.8" height="338.0" fill="none" stroke="#55a6da" stroke-width="2"/><line x1="1175.2" y1="1159.5" x2="1175.2" y2="1497.5" stroke="#6cb8de" stroke-width="1.4"/><line x1="1306.6" y1="1159.5" x2="1306.6" y2="1497.5" stroke="#6cb8de" stroke-width="1.4"/><line x1="1438.0" y1="1159.5" x2="1438.0" y2="1497.5" stroke="#6cb8de" stroke-width="1.4"/><line x1="1569.4" y1="1159.5" x2="1569.4" y2="1497.5" stroke="#6cb8de" stroke-width="1.4"/><line x1="1700.8" y1="1159.5" x2="1700.8" y2="1497.5" stroke="#6cb8de" stroke-width="1.4"/><line x1="1832.2" y1="1159.5" x2="1832.2" y2="1497.5" stroke="#6cb8de" stroke-width="1.4"/><line x1="1963.6" y1="1159.5" x2="1963.6" y2="1497.5" stroke="#6cb8de" stroke-width="1.4"/><line x1="2095.0" y1="1159.5" x2="2095.0" y2="1497.5" stroke="#6cb8de" stroke-width="1.4"/><line x1="2226.4" y1="1159.5" x2="2226.4" y2="1497.5" stroke="#6cb8de" stroke-width="1.4"/><line x1="2357.8" y1="1159.5" x2="2357.8" y2="1497.5" stroke="#6cb8de" stroke-width="1.4"/><line x1="2489.2" y1="1159.5" x2="2489.2" y2="1497.5" stroke="#6cb8de" stroke-width="1.4"/><line x1="2620.6" y1="1159.5" x2="2620.6" y2="1497.5" stroke="#6cb8de" stroke-width="1.4"/><line x1="2752.0" y1="1159.5" x2="2752.0" y2="1497.5" stroke="#6cb8de" stroke-width="1.4"/><polyline points="1240.9,1292.2 1372.3,1279.7 1503.7,1263.8 1635.1,1255.6 1766.5,1248.6 1897.9,1240.3 2029.3,1233.4 2160.7,1225.7 2292.1,1218.1 2423.5,1210.6 2554.9,1203.0 2686.3,1195.3" fill="none" stroke="#ee7767" stroke-width="2.6" stroke-linejoin="round"/><circle cx="1240.9" cy="1292.2" r="5.2" fill="#ee7767"/><circle cx="1372.3" cy="1279.7" r="5.2" fill="#ee7767"/><circle cx="1503.7" cy="1263.8" r="5.2" fill="#ee7767"/><circle cx="1635.1" cy="1255.6" r="5.2" fill="#ee7767"/><circle cx="1766.5" cy="1248.6" r="5.2" fill="#ee7767"/><circle cx="1897.9" cy="1240.3" r="5.2" fill="#ee7767"/><circle cx="2029.3" cy="1233.4" r="5.2" fill="#ee7767"/><circle cx="2160.7" cy="1225.7" r="5.2" fill="#ee7767"/><circle cx="2292.1" cy="1218.1" r="5.2" fill="#ee7767"/><circle cx="2423.5" cy="1210.6" r="5.2" fill="#ee7767"/><circle cx="2554.9" cy="1203.0" r="5.2" fill="#ee7767"/><circle cx="2686.3" cy="1195.3" r="5.2" fill="#ee7767"/><polyline points="1240.9,1448.2 1372.3,1437.7 1503.7,1424.6 1635.1,1418.4 1766.5,1412.2 1897.9,1405.3 2029.3,1399.1 2160.7,1392.9 2292.1,1387.4 2423.5,1381.2 2554.9,1374.3 2686.3,1368.0" fill="none" stroke="#5f9d3e" stroke-width="2.6" stroke-linejoin="round"/><circle cx="1240.9" cy="1448.2" r="5.2" fill="#5f9d3e"/><circle cx="1372.3" cy="1437.7" r="5.2" fill="#5f9d3e"/><circle cx="1503.7" cy="1424.6" r="5.2" fill="#5f9d3e"/><circle cx="1635.1" cy="1418.4" r="5.2" fill="#5f9d3e"/><circle cx="1766.5" cy="1412.2" r="5.2" fill="#5f9d3e"/><circle cx="1897.9" cy="1405.3" r="5.2" fill="#5f9d3e"/><circle cx="2029.3" cy="1399.1" r="5.2" fill="#5f9d3e"/><circle cx="2160.7" cy="1392.9" r="5.2" fill="#5f9d3e"/><circle cx="2292.1" cy="1387.4" r="5.2" fill="#5f9d3e"/><circle cx="2423.5" cy="1381.2" r="5.2" fill="#5f9d3e"/><circle cx="2554.9" cy="1374.3" r="5.2" fill="#5f9d3e"/><circle cx="2686.3" cy="1368.0" r="5.2" fill="#5f9d3e"/><polyline points="1240.9,1460.5 1372.3,1452.2 1503.7,1447.4 1635.1,1441.2 1766.5,1434.2 1897.9,1428.1 2029.3,1422.6 2160.7,1415.0 2292.1,1408.8 2423.5,1403.2 2554.9,1397.0 2686.3,1390.0" fill="none" stroke="#4f52d0" stroke-width="2.6" stroke-linejoin="round"/><circle cx="1240.9" cy="1460.5" r="5.2" fill="#4f52d0"/><circle cx="1372.3" cy="1452.2" r="5.2" fill="#4f52d0"/><circle cx="1503.7" cy="1447.4" r="5.2" fill="#4f52d0"/><circle cx="1635.1" cy="1441.2" r="5.2" fill="#4f52d0"/><circle cx="1766.5" cy="1434.2" r="5.2" fill="#4f52d0"/><circle cx="1897.9" cy="1428.1" r="5.2" fill="#4f52d0"/><circle cx="2029.3" cy="1422.6" r="5.2" fill="#4f52d0"/><circle cx="2160.7" cy="1415.0" r="5.2" fill="#4f52d0"/><circle cx="2292.1" cy="1408.8" r="5.2" fill="#4f52d0"/><circle cx="2423.5" cy="1403.2" r="5.2" fill="#4f52d0"/><circle cx="2554.9" cy="1397.0" r="5.2" fill="#4f52d0"/><circle cx="2686.3" cy="1390.0" r="5.2" fill="#4f52d0"/></svg>
<div class="t" style="left:2728.0px;top:851.3px;font-size:17px;transform:scaleX(1.18);transform-origin:0 0;font-weight:bold;color:#111">15</div>
<div class="t" style="left:2728.0px;top:899.6px;font-size:17px;transform:scaleX(1.18);transform-origin:0 0;font-weight:bold;color:#111">10</div>
<div class="t" style="left:2728.0px;top:947.9px;font-size:17px;transform:scaleX(1.18);transform-origin:0 0;font-weight:bold;color:#111">5</div>
<div class="t" style="left:2728.0px;top:996.2px;font-size:17px;transform:scaleX(1.18);transform-origin:0 0;font-weight:bold;color:#111">-</div>
<div class="t" style="left:2723.0px;top:1044.5px;font-size:17px;transform:scaleX(1.18);transform-origin:0 0;font-weight:bold;color:#111">(5)</div>
<div class="t" style="left:2723.0px;top:1092.7px;font-size:17px;transform:scaleX(1.18);transform-origin:0 0;font-weight:bold;color:#111">(10)</div>
<div class="t" style="left:2723.0px;top:1141.0px;font-size:17px;transform:scaleX(1.18);transform-origin:0 0;font-weight:bold;color:#111">(15)</div>
<div class="t" style="left:2723.0px;top:1189.3px;font-size:17px;transform:scaleX(1.18);transform-origin:0 0;font-weight:bold;color:#111">(20)</div>
<div class="t" style="left:1093.9px;top:1212.2px;width:200px;text-align:center;font-size:17.5px;transform:scaleX(1.1);transform-origin:50% 0;font-weight:bold;color:#111">Jan</div>
<div class="t" style="left:1225.3px;top:1212.2px;width:200px;text-align:center;font-size:17.5px;transform:scaleX(1.1);transform-origin:50% 0;font-weight:bold;color:#111">Feb</div>
<div class="t" style="left:1356.7px;top:1212.2px;width:200px;text-align:center;font-size:17.5px;transform:scaleX(1.1);transform-origin:50% 0;font-weight:bold;color:#111">Mar</div>
<div class="t" style="left:1488.1px;top:1212.2px;width:200px;text-align:center;font-size:17.5px;transform:scaleX(1.1);transform-origin:50% 0;font-weight:bold;color:#111">Apr</div>
<div class="t" style="left:1619.5px;top:1212.2px;width:200px;text-align:center;font-size:17.5px;transform:scaleX(1.1);transform-origin:50% 0;font-weight:bold;color:#111">May</div>
<div class="t" style="left:1750.9px;top:1212.2px;width:200px;text-align:center;font-size:17.5px;transform:scaleX(1.1);transform-origin:50% 0;font-weight:bold;color:#111">Jun</div>
<div class="t" style="left:1882.3px;top:1212.2px;width:200px;text-align:center;font-size:17.5px;transform:scaleX(1.1);transform-origin:50% 0;font-weight:bold;color:#111">Jul</div>
<div class="t" style="left:2013.7px;top:1212.2px;width:200px;text-align:center;font-size:17.5px;transform:scaleX(1.1);transform-origin:50% 0;font-weight:bold;color:#111">Aug</div>
<div class="t" style="left:2145.1px;top:1212.2px;width:200px;text-align:center;font-size:17.5px;transform:scaleX(1.1);transform-origin:50% 0;font-weight:bold;color:#111">Sep</div>
<div class="t" style="left:2276.5px;top:1212.2px;width:200px;text-align:center;font-size:17.5px;transform:scaleX(1.1);transform-origin:50% 0;font-weight:bold;color:#111">Oct</div>
<div class="t" style="left:2407.9px;top:1212.2px;width:200px;text-align:center;font-size:17.5px;transform:scaleX(1.1);transform-origin:50% 0;font-weight:bold;color:#111">Nov</div>
<div class="t" style="left:2539.3px;top:1212.2px;width:200px;text-align:center;font-size:17.5px;transform:scaleX(1.1);transform-origin:50% 0;font-weight:bold;color:#111">Dec</div>
<svg style="left:281px;top:825px" width="45" height="12"><line x1="0" y1="6" x2="45" y2="6" stroke="#ee7767" stroke-width="3"/><circle cx="22.5" cy="6" r="4" fill="#ee7767"/></svg>
<div class="t" style="left:331.0px;top:822.9px;font-size:17px;transform:scaleX(1.12);transform-origin:0 0;font-weight:bold;color:#111">Revenue</div>
<svg style="left:442px;top:825px" width="47" height="12"><line x1="0" y1="6" x2="47" y2="6" stroke="#5f9d3e" stroke-width="3"/><circle cx="23.5" cy="6" r="4" fill="#5f9d3e"/></svg>
<div class="t" style="left:497.6px;top:822.9px;font-size:17px;transform:scaleX(1.12);transform-origin:0 0;font-weight:bold;color:#111">EBITDA</div>
<svg style="left:606px;top:825px" width="46" height="12"><line x1="0" y1="6" x2="46" y2="6" stroke="#4f52d0" stroke-width="3"/><circle cx="23.0" cy="6" r="4" fill="#4f52d0"/></svg>
<div class="t" style="left:659.8px;top:822.9px;font-size:17px;transform:scaleX(1.145);transform-origin:0 0;font-weight:bold;color:#111">Net Profit After Tax</div>
<svg style="left:1670.6px;top:825.4000000000001px" width="47.0" height="12"><line x1="0" y1="6" x2="47.0" y2="6" stroke="#ee7767" stroke-width="3"/><circle cx="23.5" cy="6" r="4" fill="#ee7767"/></svg>
<div class="t" style="left:1721.0px;top:823.3px;font-size:17px;transform:scaleX(1.12);transform-origin:0 0;font-weight:bold;color:#111">Revenue</div>
<svg style="left:1832px;top:825.4000000000001px" width="47" height="12"><line x1="0" y1="6" x2="47" y2="6" stroke="#5f9d3e" stroke-width="3"/><circle cx="23.5" cy="6" r="4" fill="#5f9d3e"/></svg>
<div class="t" style="left:1887.0px;top:823.3px;font-size:17px;transform:scaleX(1.12);transform-origin:0 0;font-weight:bold;color:#111">EBITDA</div>
<svg style="left:1995px;top:825.4000000000001px" width="47" height="12"><line x1="0" y1="6" x2="47" y2="6" stroke="#4f52d0" stroke-width="3"/><circle cx="23.5" cy="6" r="4" fill="#4f52d0"/></svg>
<div class="t" style="left:2050.0px;top:823.3px;font-size:17px;transform:scaleX(1.145);transform-origin:0 0;font-weight:bold;color:#111">Net Profit After Tax</div>
</div>
<svg style="left:44px;top:1683px" width="14" height="20"><path d="M11 1.5 L3 10 L11 18.5" stroke="#aaa" stroke-width="1.8" fill="none"/></svg>
<svg style="left:92px;top:1683px" width="14" height="20"><path d="M3 1.5 L11 10 L3 18.5" stroke="#ddd" stroke-width="1.8" fill="none"/></svg>
<div class="t" style="left:189.0px;top:1686.1px;font-size:20.5px;color:#fff;transform:scaleX(1.03);transform-origin:0 0">Contents</div>
<div class="a" style="left:292px;top:1680px;width:1px;height:28px;background:#8a8a8a"></div>
<div class="a" style="left:433px;top:1680px;width:1px;height:28px;background:#8a8a8a"></div>
<div class="a" style="left:552.7px;top:1680px;width:1px;height:28px;background:#8a8a8a"></div>
<div class="a" style="left:723.6px;top:1680px;width:1px;height:28px;background:#8a8a8a"></div>
<div class="a" style="left:825.5px;top:1680px;width:1px;height:28px;background:#8a8a8a"></div>
<div class="a" style="left:925.3px;top:1680px;width:1px;height:28px;background:#8a8a8a"></div>
<div class="a" style="left:1051.4px;top:1680px;width:1px;height:28px;background:#8a8a8a"></div>
<div class="a" style="left:1154.5px;top:1680px;width:1px;height:28px;background:#8a8a8a"></div>
<div class="a" style="left:1209px;top:1680px;width:1px;height:28px;background:#8a8a8a"></div>
<div class="a" style="left:1270px;top:1680px;width:1px;height:28px;background:#8a8a8a"></div>
<div class="a" style="left:1331px;top:1680px;width:1px;height:28px;background:#8a8a8a"></div>
<div class="a" style="left:1459px;top:1680px;width:1px;height:28px;background:#8a8a8a"></div>
<div class="a" style="left:1587px;top:1680px;width:1px;height:28px;background:#8a8a8a"></div>
<div class="a" style="left:1715px;top:1680px;width:1px;height:28px;background:#8a8a8a"></div>
<div class="a" style="left:1775.4px;top:1680px;width:1px;height:28px;background:#8a8a8a"></div>
<div class="a" style="left:1860.6px;top:1680px;width:1px;height:28px;background:#8a8a8a"></div>
<div class="a" style="left:1958.9px;top:1680px;width:1px;height:28px;background:#8a8a8a"></div>
<div class="a" style="left:2035.7px;top:1680px;width:1px;height:28px;background:#8a8a8a"></div>
<div class="a" style="left:299px;top:1676px;width:127.5px;height:35.5px;background:#fde96b;border-radius:6px"></div>
<div class="t" style="left:279.0px;top:1686.1px;width:167.5px;text-align:center;font-size:20.5px;color:#111;transform:scaleX(1.01)">Dashboard</div>
<div class="a" style="left:440px;top:1676px;width:106px;height:35.5px;background:#fde96b;border-radius:6px"></div>
<div class="t" style="left:420.0px;top:1686.1px;width:146px;text-align:center;font-size:20.5px;color:#111;transform:scaleX(0.98)">Revenue</div>
<div class="a" style="left:559px;top:1676px;width:157.29999999999995px;height:35.5px;background:#fde96b;border-radius:6px"></div>
<div class="t" style="left:539.0px;top:1686.1px;width:197.29999999999995px;text-align:center;font-size:20.5px;color:#111;transform:scaleX(0.95)">COGS &amp; OPEX</div>
<div class="a" style="left:730.5px;top:1676px;width:88.10000000000002px;height:35.5px;background:#fde96b;border-radius:6px"></div>
<div class="t" style="left:710.5px;top:1686.1px;width:128.10000000000002px;text-align:center;font-size:20.5px;color:#111;transform:scaleX(1.01)">Payroll</div>
<div class="a" style="left:832px;top:1676px;width:86.39999999999998px;height:35.5px;background:#fde96b;border-radius:6px"></div>
<div class="t" style="left:812.0px;top:1686.1px;width:126.39999999999998px;text-align:center;font-size:20.5px;color:#111;transform:scaleX(0.9)">CAPEX</div>
<div class="a" style="left:932.5px;top:1676px;width:112.5px;height:35.5px;background:#fde96b;border-radius:6px"></div>
<div class="t" style="left:912.5px;top:1686.1px;width:152.5px;text-align:center;font-size:20.5px;color:#111;transform:scaleX(1.0)">CapTable</div>
<div class="a" style="left:1058.3px;top:1676px;width:89.29999999999995px;height:35.5px;background:#fde96b;border-radius:6px"></div>
<div class="t" style="left:1038.3px;top:1686.1px;width:129.29999999999995px;text-align:center;font-size:20.5px;color:#111;transform:scaleX(1.02)">Capital</div>
<div class="a" style="left:1161px;top:1676px;width:41.799999999999955px;height:35.5px;background:#4ab0e6;border-radius:6px"></div>
<div class="t" style="left:1141.0px;top:1686.1px;width:81.79999999999995px;text-align:center;font-size:20.5px;color:#111;transform:scaleX(0.9)">IS</div>
<div class="a" style="left:1215.7px;top:1676px;width:47.899999999999864px;height:35.5px;background:#4ab0e6;border-radius:6px"></div>
<div class="t" style="left:1195.7px;top:1686.1px;width:87.89999999999986px;text-align:center;font-size:20.5px;color:#111;transform:scaleX(0.94)">CF</div>
<div class="a" style="left:1276.6px;top:1676px;width:47.90000000000009px;height:35.5px;background:#4ab0e6;border-radius:6px"></div>
<div class="t" style="left:1256.6px;top:1686.1px;width:87.90000000000009px;text-align:center;font-size:20.5px;color:#111;transform:scaleX(0.87)">BS</div>
<div class="a" style="left:1338.3px;top:1676px;width:114.5px;height:35.5px;background:#4ab0e6;border-radius:6px"></div>
<div class="t" style="left:1318.3px;top:1686.1px;width:154.5px;text-align:center;font-size:20.5px;color:#111;transform:scaleX(0.98)">Scenarios</div>
<div class="a" style="left:1466px;top:1676px;width:114.59999999999991px;height:35.5px;background:#4ab0e6;border-radius:6px"></div>
<div class="t" style="left:1446.0px;top:1686.1px;width:154.5999999999999px;text-align:center;font-size:20.5px;color:#111;transform:scaleX(1.06)">Valuation</div>
<div class="a" style="left:1721px;top:1676px;width:47.5px;height:35.5px;background:#4ab0e6;border-radius:6px"></div>
<div class="t" style="left:1701.0px;top:1686.1px;width:87.5px;text-align:center;font-size:20.5px;color:#111;transform:scaleX(0.96)">BE</div>
<div class="a" style="left:1782px;top:1676px;width:71.70000000000005px;height:35.5px;background:#4ab0e6;border-radius:6px"></div>
<div class="t" style="left:1762.0px;top:1686.1px;width:111.70000000000005px;text-align:center;font-size:20.5px;color:#111;transform:scaleX(0.95)">ROIC</div>
<div class="a" style="left:1867px;top:1676px;width:84.59999999999991px;height:35.5px;background:#4ab0e6;border-radius:6px"></div>
<div class="t" style="left:1847.0px;top:1686.1px;width:124.59999999999991px;text-align:center;font-size:20.5px;color:#111;transform:scaleX(0.99)">Charts</div>
<div class="a" style="left:1965.3px;top:1676px;width:63.200000000000045px;height:35.5px;background:#4ab0e6;border-radius:6px"></div>
<div class="t" style="left:1945.3px;top:1686.1px;width:103.20000000000005px;text-align:center;font-size:20.5px;color:#111;transform:scaleX(0.94)">KPIs</div>
<div class="a" style="left:2042px;top:1676px;width:30px;height:35.5px;overflow:hidden"><div class="a" style="left:0;top:0;width:60px;height:35.5px;background:#4ab0e6;border-radius:6px"></div><div class="t" style="left:8px;top:10px;font-size:20.5px;color:#111">Sc</div></div>
<div class="a" style="left:1594px;top:1670px;width:113.6px;height:41.5px;background:linear-gradient(#ffffff,#e6f0fa);border-radius:0 0 6px 6px"></div>
<div class="t" style="left:1581.0px;top:1681.6px;width:140px;text-align:center;font-size:20.5px;color:#111;transform:scaleX(1.05)">Summary</div>
<div class="a" style="left:1606px;top:1704px;width:89.5px;height:3px;background:#1e8a4a;border-radius:1px"></div>
<div class="a" style="left:2090.0px;top:1690px;width:3px;height:3px;background:#fff;border-radius:2px"></div>
<div class="a" style="left:2095.5px;top:1690px;width:3px;height:3px;background:#fff;border-radius:2px"></div>
<div class="a" style="left:2101.0px;top:1690px;width:3px;height:3px;background:#fff;border-radius:2px"></div>
<svg style="left:2133px;top:1683px" width="20" height="20"><path d="M10 1 V19 M1 10 H19" stroke="#fff" stroke-width="1.8"/></svg>
<div class="a" style="left:2190px;top:1683px;width:3.5px;height:3.5px;background:#fff;border-radius:2px"></div>
<div class="a" style="left:2190px;top:1690px;width:3.5px;height:3.5px;background:#fff;border-radius:2px"></div>
<div class="a" style="left:2190px;top:1697px;width:3.5px;height:3.5px;background:#fff;border-radius:2px"></div>
<div class="a" style="left:2217px;top:1680px;width:643px;height:26px;background:#181818;border-radius:13px"></div>
<svg style="left:2222px;top:1686px" width="12" height="14"><path d="M11 1 L2 7 L11 13 Z" fill="#9a9a9a" stroke="#9a9a9a" stroke-width="1.5" stroke-linejoin="round"/></svg>
<div class="a" style="left:2242px;top:1687.5px;width:537px;height:11.5px;background:#9e9e9e;border-radius:6px"></div>
<svg style="left:2841px;top:1686px" width="12" height="14"><path d="M1 1 L10 7 L1 13 Z" fill="#9a9a9a" stroke="#9a9a9a" stroke-width="1.5" stroke-linejoin="round"/></svg>
<div class="a" style="left:11px;top:1718px;width:2880px;height:33px;background:#131313"></div>
<div class="a" style="left:11px;top:1718px;width:2880px;height:1px;background:#2a2a2a"></div>
<div class="t" style="left:27.0px;top:1728.0px;font-size:16px;color:#fff;transform:scaleX(0.92);transform-origin:0 0">Ready</div>
<svg style="left:98px;top:1726px" width="23" height="20"><rect x="1" y="1" width="21" height="18" stroke="#ddd" stroke-width="1.5" fill="none"/><path d="M1 5 H22 M4 9 H9 M4 13 H8 M4 17 H8" stroke="#ddd" stroke-width="1.4"/><circle cx="15" cy="13" r="5" stroke="#ddd" stroke-width="1.5" fill="#131313"/><circle cx="15" cy="13" r="2" fill="#ddd"/></svg>
<svg style="left:145px;top:1724px" width="23" height="24"><circle cx="10" cy="3.5" r="2.5" stroke="#ddd" stroke-width="1.4" fill="none"/><path d="M2 8 L10 9.5 L18 8 M10 9.5 V15 L6 23 M10 15 L13 19" stroke="#ddd" stroke-width="1.5" fill="none"/><path d="M14 15 L22 23 M22 15 L14 23" stroke="#ddd" stroke-width="1.5"/></svg>
<div class="t" style="left:173.0px;top:1728.0px;font-size:16px;color:#fff;font-weight:bold;transform:scaleX(0.98);transform-origin:0 0">Accessibility: Investigate</div>
<div class="a" style="left:2445.6px;top:1718px;width:60px;height:33px;background:#262626"></div>
<svg style="left:2464px;top:1724px" width="22" height="22"><g stroke="#eee" stroke-width="1.6" fill="none"><rect x="1" y="1" width="19" height="19"/><path d="M1 7.3 H20 M1 13.6 H20 M7.3 1 V20 M13.6 1 V20"/></g></svg>
<svg style="left:2524px;top:1724px" width="23" height="22"><g stroke="#ddd" stroke-width="1.5" fill="none"><rect x="1" y="1" width="21" height="20"/><rect x="5" y="4" width="13" height="14"/><path d="M8 8 H15 M8 11 H15 M8 14 H15"/></g></svg>
<svg style="left:2584px;top:1724px" width="23" height="22"><g stroke="#ddd" stroke-width="1.6" fill="none"><rect x="1" y="1" width="21" height="20"/><path d="M9 1 V12 H17 V1"/></g></svg>
<div class="a" style="left:2633px;top:1735px;width:13px;height:1.5px;background:#ddd"></div>
<div class="a" style="left:2653px;top:1734.5px;width:147px;height:2px;background:#9a9a9a"></div>
<div class="a" style="left:2726px;top:1726px;width:9px;height:17px;background:#aaa;border-radius:1px"></div>
<svg style="left:2808px;top:1728px" width="14" height="14"><path d="M7 0 V14 M0 7 H14" stroke="#ddd" stroke-width="1.5"/></svg>
<div class="t" style="left:2840.0px;top:1728.0px;font-size:16px;color:#fff">115%</div></body></html>
